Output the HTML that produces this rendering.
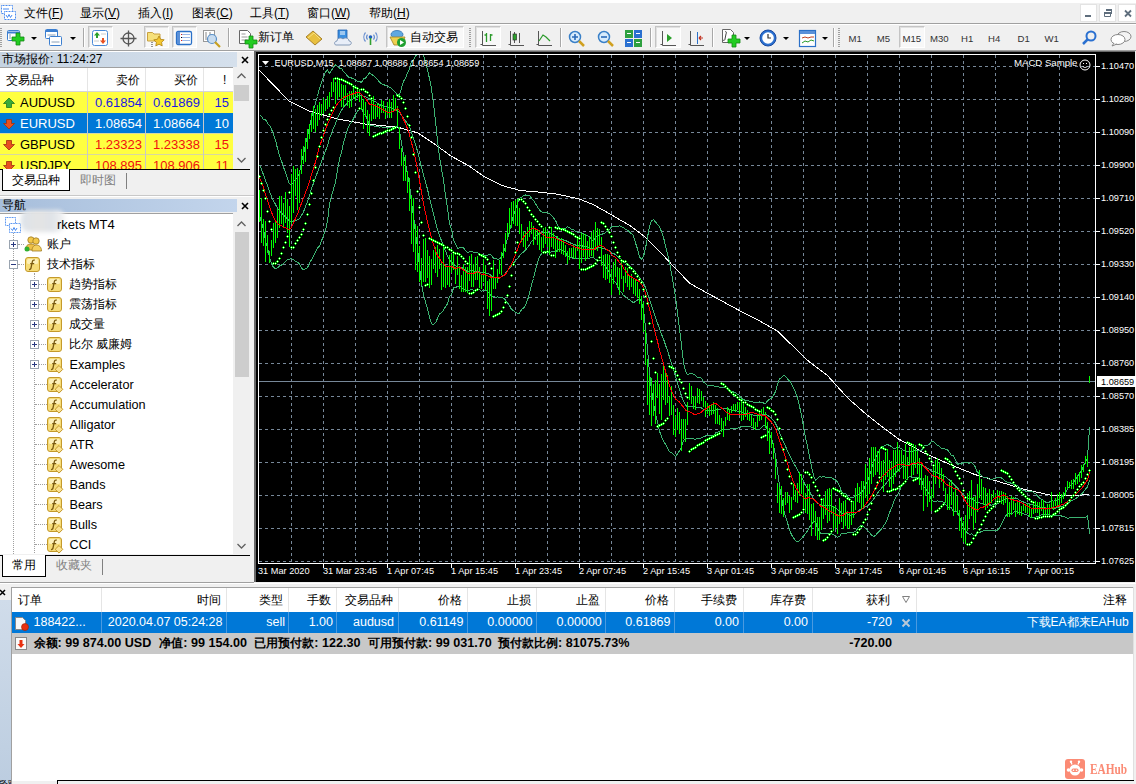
<!DOCTYPE html>
<html><head><meta charset="utf-8">
<style>
*{margin:0;padding:0;box-sizing:border-box}
html,body{width:1136px;height:784px;overflow:hidden;background:#f0f0f0;font-family:"Liberation Sans",sans-serif;font-size:12px;color:#000}
.a{position:absolute}
.t{position:absolute;white-space:nowrap;line-height:12px}
.r{text-align:right}
svg{position:absolute;overflow:visible}
.mw td{}
</style></head><body>
<!-- top white strip -->
<div class="a" style="left:0;top:0;width:1136px;height:3px;background:#fff"></div>
<!-- menu bar -->
<svg style="left:1px;top:5px" width="15" height="15" viewBox="0 0 15 15"><rect x="0.5" y="0.5" width="11" height="8" fill="#fff" stroke="#4a8cf0" stroke-dasharray="1 0.5"/><rect x="3.5" y="6.5" width="11" height="8" fill="#fff" stroke="#4a8cf0" stroke-dasharray="1 0.5"/><path d="M5 10l1.5 2.5 1.5-3 1.5 3 1.5-2.5" stroke="#4a8cf0" fill="none"/><path d="M2 4h6" stroke="#4a8cf0"/></svg>
<div class="a" style="left:0;top:23px;width:1136px;height:1px;background:#a0a0a0"></div>
<div class="a" style="left:0;top:24px;width:1136px;height:1px;background:#fff"></div>
<div class="t" style="left:24px;top:7px">文件(<u>F</u>)</div>
<div class="t" style="left:80px;top:7px">显示(<u>V</u>)</div>
<div class="t" style="left:138px;top:7px">插入(<u>I</u>)</div>
<div class="t" style="left:192px;top:7px">图表(<u>C</u>)</div>
<div class="t" style="left:250px;top:7px">工具(<u>T</u>)</div>
<div class="t" style="left:307px;top:7px">窗口(<u>W</u>)</div>
<div class="t" style="left:369px;top:7px">帮助(<u>H</u>)</div>
<!-- MDI buttons -->
<div class="a" style="left:1080px;top:4px;width:17px;height:18px;background:#fff;border:1px solid #e3e3e3"></div>
<div class="a" style="left:1099px;top:4px;width:17px;height:18px;background:#fff;border:1px solid #e3e3e3"></div>
<div class="a" style="left:1118px;top:4px;width:18px;height:18px;background:#fff;border:1px solid #e3e3e3"></div>
<svg style="left:1070px;top:0px" width="66" height="26" viewBox="0 0 66 26"><path d="M15 15h6v2h-6z" fill="#5f6e7d"/><path d="M34.5 12.5h6v4h-6z" fill="none" stroke="#5f6e7d"/><path d="M34 12h7v2h-7zM36 9h6v2h-6zM41 9h1v5h-1z" fill="#5f6e7d"/><path d="M55 10.5l6 6M61 10.5l-6 6" stroke="#5f6e7d" stroke-width="1.8"/></svg>
<!-- toolbar bottom -->
<div class="a" style="left:0;top:50px;width:1136px;height:1px;background:#a0a0a0"></div>

<div class="a" style="left:0px;top:28px;width:2px;height:20px;background:repeating-linear-gradient(180deg,#a0a0a0 0 1px,transparent 1px 2px)"></div>
<svg style="left:7px;top:29px" width="18" height="17" viewBox="0 0 18 17"><rect x="0.5" y="1.5" width="12" height="10" rx="1" fill="#fff" stroke="#3c7fd0"/><path d="M0.5 3.5h12" stroke="#3c7fd0" stroke-width="2"/><path d="M3 5v5" stroke="#8aa0b8"/><path d="M9 4h4v4h4v4h-4v4h-4v-4h-4v-4h4z" fill="#22cc22" stroke="#118811" stroke-width="0.8"/></svg>
<svg style="left:31px;top:37px" width="6" height="4" viewBox="0 0 6 4"><path d="M0 0h6L3 3z" fill="#000"/></svg>
<svg style="left:45px;top:29px" width="18" height="18" viewBox="0 0 18 18"><rect x="0.5" y="0.5" width="12" height="9" rx="1" fill="#fff" stroke="#3c7fd0"/><path d="M0.5 2h12" stroke="#3c7fd0" stroke-width="2"/><rect x="4.5" y="7.5" width="12" height="9" rx="1" fill="#fff" stroke="#3c7fd0"/><path d="M2.5 6h8M6.5 13h8" stroke="#8aa0b8"/></svg>
<svg style="left:70px;top:37px" width="6" height="4" viewBox="0 0 6 4"><path d="M0 0h6L3 3z" fill="#000"/></svg>
<div class="a" style="left:83px;top:28px;width:1px;height:19px;background:#a8a8a8"></div>
<div class="a" style="left:84px;top:28px;width:1px;height:19px;background:#fff"></div>
<div class="a" style="left:88px;top:26px;width:25px;height:22px;background:#f8f8f8;border:1px solid #c4c4c4;border-right-color:#fff;border-bottom-color:#fff;box-shadow:inset 1px 1px 0 #e0e0e0"></div>
<svg style="left:92px;top:30px" width="16" height="16" viewBox="0 0 16 16"><rect x="0.5" y="0.5" width="15" height="15" rx="2" fill="#fff" stroke="#4a8ad8"/><path d="M5 2l3 3.5H6v2.5H4V5.5H2z" fill="#2aa02a"/><path d="M11 14l3-3.5h-2V8h-2v2.5H8z" fill="#e85020"/><path d="M9 4h5M2 11h5" stroke="#ccc"/></svg>
<svg style="left:120px;top:30px" width="17" height="17" viewBox="0 0 17 17"><circle cx="8.5" cy="8.5" r="5.5" fill="none" stroke="#555" stroke-width="1.3"/><path d="M8.5 0.5v16M0.5 8.5h16" stroke="#555" stroke-width="1.3"/></svg>
<div class="a" style="left:144px;top:26px;width:25px;height:22px;background:#f8f8f8;border:1px solid #c4c4c4;border-right-color:#fff;border-bottom-color:#fff;box-shadow:inset 1px 1px 0 #e0e0e0"></div>
<svg style="left:147px;top:30px" width="18" height="17" viewBox="0 0 18 17"><path d="M0.5 2.5h5l1.5 1.5h6v7h-12.5z" fill="#f6e07a" stroke="#c8a040"/><path d="M12 6l1.6 3.3 3.6 0.5-2.6 2.5 0.6 3.6-3.2-1.7-3.2 1.7 0.6-3.6-2.6-2.5 3.6-0.5z" fill="#f4c830" stroke="#b08010" stroke-width="0.8"/><path d="M5 12v5" stroke="#333" stroke-dasharray="1 1"/></svg>
<div class="a" style="left:172px;top:26px;width:25px;height:22px;background:#f8f8f8;border:1px solid #c4c4c4;border-right-color:#fff;border-bottom-color:#fff;box-shadow:inset 1px 1px 0 #e0e0e0"></div>
<svg style="left:176px;top:31px" width="17" height="15" viewBox="0 0 17 15"><rect x="0.5" y="0.5" width="15" height="13" rx="1.5" fill="#fff" stroke="#2a70c8" stroke-width="1.3"/><path d="M1 1h3v12H1z" fill="#5a90d8"/><path d="M6 3.5h8M6 6.5h8M6 9.5h8" stroke="#9ab8e8"/><path d="M5 3h1v1H5zM5 9h1v1H5z" fill="#e02020"/><path d="M5 6h1v1H5z" fill="#000"/></svg>
<svg style="left:203px;top:30px" width="20" height="18" viewBox="0 0 20 18"><rect x="0.5" y="0.5" width="11" height="11" fill="#fff" stroke="#999"/><path d="M3 2v8M7 2v8" stroke="#888"/><circle cx="9" cy="9" r="4.5" fill="#c8dcf0" stroke="#5a90c8" stroke-width="1.2"/><path d="M12 12l5 5" stroke="#c8a020" stroke-width="2.2"/></svg>
<div class="a" style="left:228px;top:28px;width:1px;height:19px;background:#a8a8a8"></div>
<div class="a" style="left:229px;top:28px;width:1px;height:19px;background:#fff"></div>
<svg style="left:239px;top:30px" width="18" height="18" viewBox="0 0 18 18"><path d="M0.5 0.5h8l3 3v10h-11z" fill="#fff" stroke="#666"/><path d="M2.5 4h4M2.5 7h6M2.5 10h6" stroke="#999"/><path d="M10 6h4v4h4v4h-4v4h-4v-4h-4v-4h4z" fill="#22cc22" stroke="#118811" stroke-width="0.8"/></svg>
<div class="t" style="left:258px;top:31px">新订单</div>
<svg style="left:305px;top:30px" width="18" height="16" viewBox="0 0 18 16"><path d="M1 7L8 1l9 8-7 6z" fill="#e8c040" stroke="#a07820" stroke-width="0.9"/><path d="M3 8l6-5 6 6" fill="none" stroke="#f8e080"/></svg>
<svg style="left:334px;top:29px" width="17" height="18" viewBox="0 0 17 18"><path d="M4 1h9v9H4z" fill="#3c90e0" stroke="#2060b0" stroke-width="0.8"/><path d="M6 3h5M6 5h5" stroke="#fff"/><path d="M2 16c-2 0-2-4 1-4 0-3 4-4 6-2 2-2 6-1 6 2 3 0 3 4 0 4z" fill="#e8eef8" stroke="#7890b0" stroke-width="0.9"/></svg>
<svg style="left:362px;top:29px" width="17" height="18" viewBox="0 0 17 18"><path d="M3.5 12.5a7 7 0 0 1 0-9M13.5 12.5a7 7 0 0 0 0-9M5.5 10.5a4 4 0 0 1 0-5M11.5 10.5a4 4 0 0 0 0-5" fill="none" stroke="#6a90d0" stroke-width="1.2"/><circle cx="8.5" cy="8" r="1.8" fill="#2060c0"/><path d="M8.5 9v7" stroke="#30a030" stroke-width="1.6"/></svg>
<div class="a" style="left:386px;top:26px;width:78px;height:22px;background:#f8f8f8;border:1px solid #c4c4c4;border-right-color:#fff;border-bottom-color:#fff;box-shadow:inset 1px 1px 0 #e0e0e0"></div>
<svg style="left:389px;top:30px" width="18" height="17" viewBox="0 0 18 17"><ellipse cx="8" cy="4.5" rx="6" ry="4" fill="#60a8e0" stroke="#3070b0" stroke-width="0.8"/><path d="M1 7l15 0-3 8H5z" fill="#f0d050" stroke="#a08020" stroke-width="0.8"/><circle cx="12.5" cy="12.5" r="4.5" fill="#20a030"/><path d="M11 10v5l4-2.5z" fill="#fff"/></svg>
<div class="t" style="left:410px;top:31px">自动交易</div>
<div class="a" style="left:469px;top:28px;width:2px;height:20px;background:repeating-linear-gradient(180deg,#a0a0a0 0 1px,transparent 1px 2px)"></div>
<div class="a" style="left:475px;top:26px;width:26px;height:22px;background:#f8f8f8;border:1px solid #c4c4c4;border-right-color:#fff;border-bottom-color:#fff;box-shadow:inset 1px 1px 0 #e0e0e0"></div>
<svg style="left:480px;top:30px" width="17" height="17" viewBox="0 0 17 17"><path d="M2.5 1v14.5H16M0.5 14.5h2" stroke="#555" fill="none"/><path d="M6.5 3v9M4.5 5h2M10.5 4v7M10.5 5h2" stroke="#2a9a2a" fill="none" stroke-width="1.3"/></svg>
<svg style="left:508px;top:30px" width="17" height="17" viewBox="0 0 17 17"><path d="M2.5 1v14.5H16M0.5 14.5h2" stroke="#555" fill="none"/><path d="M6.5 2v11" stroke="#555"/><rect x="5" y="4" width="3.5" height="6" fill="#2aa02a" stroke="#333" stroke-width="0.7"/><path d="M11.5 3v10" stroke="#555"/></svg>
<svg style="left:536px;top:30px" width="17" height="17" viewBox="0 0 17 17"><path d="M2.5 1v14.5H16M0.5 14.5h2" stroke="#555" fill="none"/><path d="M3 11l4-6 3 2 4 4" stroke="#2a9a2a" fill="none" stroke-width="1.2"/></svg>
<div class="a" style="left:560px;top:28px;width:1px;height:19px;background:#a8a8a8"></div>
<div class="a" style="left:561px;top:28px;width:1px;height:19px;background:#fff"></div>
<svg style="left:568px;top:30px" width="18" height="18" viewBox="0 0 18 18"><circle cx="7" cy="7" r="5.5" fill="#d8ecfc" stroke="#3a80c8" stroke-width="1.5"/><path d="M11 11l5 5" stroke="#d0a020" stroke-width="2.5"/><path d="M4 7h6M7 4v6" stroke="#2a6ab8" stroke-width="1.6"/></svg>
<svg style="left:597px;top:30px" width="18" height="18" viewBox="0 0 18 18"><circle cx="7" cy="7" r="5.5" fill="#d8ecfc" stroke="#3a80c8" stroke-width="1.5"/><path d="M11 11l5 5" stroke="#d0a020" stroke-width="2.5"/><path d="M4 7h6" stroke="#2a6ab8" stroke-width="1.6"/></svg>
<svg style="left:625px;top:30px" width="17" height="17" viewBox="0 0 17 17"><rect x="0" y="0" width="8" height="8" fill="#2ea040"/><rect x="9" y="0" width="8" height="8" fill="#2a70d0"/><rect x="0" y="9" width="8" height="8" fill="#2a70d0"/><rect x="9" y="9" width="8" height="8" fill="#2ea040"/><path d="M2 3.5h4M11 3.5h4M2 12.5h4M11 12.5h4" stroke="#fff"/></svg>
<div class="a" style="left:650px;top:28px;width:1px;height:19px;background:#a8a8a8"></div>
<div class="a" style="left:651px;top:28px;width:1px;height:19px;background:#fff"></div>
<div class="a" style="left:655px;top:26px;width:26px;height:22px;background:#f8f8f8;border:1px solid #c4c4c4;border-right-color:#fff;border-bottom-color:#fff;box-shadow:inset 1px 1px 0 #e0e0e0"></div>
<svg style="left:660px;top:30px" width="17" height="17" viewBox="0 0 17 17"><path d="M2.5 1v14.5H16M0.5 14.5h2" stroke="#555" fill="none"/><path d="M7 4v8l5-4z" fill="#2aa02a"/></svg>
<svg style="left:688px;top:30px" width="17" height="17" viewBox="0 0 17 17"><path d="M2.5 1v14.5H16M0.5 14.5h2" stroke="#555" fill="none"/><path d="M9.5 2v12" stroke="#2a70c8"/><path d="M15 8h-4M11 8l2-2M11 8l2 2" stroke="#c03020" stroke-width="1.2"/></svg>
<div class="a" style="left:712px;top:28px;width:1px;height:19px;background:#a8a8a8"></div>
<div class="a" style="left:713px;top:28px;width:1px;height:19px;background:#fff"></div>
<svg style="left:722px;top:29px" width="17" height="18" viewBox="0 0 17 18"><path d="M0.5 0.5h8l3 3v10h-11z" fill="#fff" stroke="#666"/><path d="M3 3c1-1 2 0 1 2l-1 5c0 1-1 2-2 1" stroke="#444" fill="none"/><path d="M10 6h4v4h4v4h-4v4h-4v-4h-4v-4h4z" fill="#22cc22" stroke="#118811" stroke-width="0.8"/></svg>
<svg style="left:744px;top:37px" width="6" height="4" viewBox="0 0 6 4"><path d="M0 0h6L3 3z" fill="#000"/></svg>
<svg style="left:759px;top:29px" width="18" height="18" viewBox="0 0 18 18"><circle cx="9" cy="9" r="8" fill="#2a70d0" stroke="#1a4aa0"/><circle cx="9" cy="9" r="5.8" fill="#fff"/><path d="M9 5v4h3" stroke="#333" stroke-width="1.2" fill="none"/></svg>
<svg style="left:783px;top:37px" width="6" height="4" viewBox="0 0 6 4"><path d="M0 0h6L3 3z" fill="#000"/></svg>
<svg style="left:799px;top:30px" width="17" height="17" viewBox="0 0 17 17"><rect x="0.5" y="0.5" width="16" height="16" fill="#fff" stroke="#2a70c8" stroke-width="1.2"/><path d="M1 1h15v3H1z" fill="#5a90d8"/><path d="M3 8l3-1 3 1 3-1 3 0" stroke="#c04020" fill="none"/><path d="M3 13l3-2 3 1 3-2 3 1" stroke="#2a9a2a" fill="none"/></svg>
<svg style="left:822px;top:37px" width="6" height="4" viewBox="0 0 6 4"><path d="M0 0h6L3 3z" fill="#000"/></svg>
<div class="a" style="left:833px;top:28px;width:1px;height:19px;background:#a8a8a8"></div>
<div class="a" style="left:834px;top:28px;width:1px;height:19px;background:#fff"></div>
<div class="a" style="left:838px;top:28px;width:2px;height:20px;background:repeating-linear-gradient(180deg,#a0a0a0 0 1px,transparent 1px 2px)"></div>
<div class="a" style="left:899px;top:26px;width:26px;height:22px;background:#f8f8f8;border:1px solid #c4c4c4;border-right-color:#fff;border-bottom-color:#fff;box-shadow:inset 1px 1px 0 #e0e0e0"></div>
<div class="t" style="left:848.6px;top:33.5px;font-size:9.6px;line-height:10px;color:#333">M1</div>
<div class="t" style="left:876.7px;top:33.5px;font-size:9.6px;line-height:10px;color:#333">M5</div>
<div class="t" style="left:902.5px;top:33.5px;font-size:9.6px;line-height:10px;color:#333">M15</div>
<div class="t" style="left:930px;top:33.5px;font-size:9.6px;line-height:10px;color:#333">M30</div>
<div class="t" style="left:961px;top:33.5px;font-size:9.6px;line-height:10px;color:#333">H1</div>
<div class="t" style="left:988px;top:33.5px;font-size:9.6px;line-height:10px;color:#333">H4</div>
<div class="t" style="left:1017.5px;top:33.5px;font-size:9.6px;line-height:10px;color:#333">D1</div>
<div class="t" style="left:1044.5px;top:33.5px;font-size:9.6px;line-height:10px;color:#333">W1</div>
<svg style="left:1082px;top:30px" width="15" height="15" viewBox="0 0 15 15"><circle cx="9" cy="6" r="4.5" fill="none" stroke="#2a70d0" stroke-width="2"/><path d="M6 9l-5 5" stroke="#2a70d0" stroke-width="2.5"/></svg>
<svg style="left:1110px;top:31px" width="22" height="15" viewBox="0 0 22 15"><ellipse cx="14" cy="5.5" rx="7" ry="5" fill="#f4f4f4" stroke="#888"/><ellipse cx="8" cy="8.5" rx="7" ry="5" fill="#fff" stroke="#888"/><path d="M4 12l-2 3 5-2" fill="#fff" stroke="#888"/></svg>

<!-- LEFT PANEL: market watch -->
<div class="a" style="left:0;top:51px;width:254px;height:1px;background:#fff"></div>
<div class="a" style="left:0;top:52px;width:237px;height:15px;background:linear-gradient(90deg,#c5d3e2,#d5e0ec)"></div>
<div class="t" style="left:2px;top:53px;">市场报价: 11:24:27</div>
<svg style="left:241px;top:56px" width="8" height="8"><path d="M1 1l6 6M7 1l-6 6" stroke="#000" stroke-width="1.6"/></svg>
<div class="a" style="left:0;top:67px;width:233px;height:102px;background:#fff;border-top:1px solid #a0a0a0"></div>
<!-- header -->
<div class="a" style="left:87px;top:68px;width:1px;height:24px;background:#e5e5e5"></div>
<div class="a" style="left:145px;top:68px;width:1px;height:24px;background:#e5e5e5"></div>
<div class="a" style="left:203px;top:68px;width:1px;height:24px;background:#e5e5e5"></div>
<div class="t" style="left:6px;top:74px">交易品种</div>
<div class="t r" style="left:100px;top:74px;width:40px">卖价</div>
<div class="t r" style="left:158px;top:74px;width:40px">买价</div>
<div class="t" style="left:223px;top:74px">!</div>
<div class="a" style="left:0;top:91px;width:233px;height:1px;background:#d5d5d5"></div>
<!-- rows -->
<div class="a" style="left:0;top:92px;width:233px;height:21px;background:#ffff40"></div>
<div class="a" style="left:0;top:113px;width:233px;height:21px;background:#0078d7"></div>
<div class="a" style="left:0;top:134px;width:233px;height:21px;background:#ffff40"></div>
<div class="a" style="left:0;top:155px;width:233px;height:14px;background:#ffff40;overflow:hidden"></div>
<div class="a" style="left:0;top:133px;width:233px;height:1px;background:#d8d8a0"></div>
<div class="a" style="left:0;top:154px;width:233px;height:1px;background:#d8d8a0"></div>
<div class="a" style="left:87px;top:92px;width:1px;height:77px;background:#c8c8c8"></div>
<div class="a" style="left:145px;top:92px;width:1px;height:77px;background:#c8c8c8"></div>
<div class="a" style="left:203px;top:92px;width:1px;height:77px;background:#c8c8c8"></div>
<div class="a" style="left:0;top:92px;width:233px;height:77px;overflow:hidden">
 <svg style="left:3px;top:6px" width="12" height="10"><path d="M6 0L11.5 5.5H8.5V9.5H3.5V5.5H0.5Z" fill="#3aaa3a" stroke="#1f7a1f" stroke-width="0.8"/></svg>
 <svg style="left:3px;top:27px" width="12" height="10"><path d="M6 10L11.5 4.5H8.5V0.5H3.5V4.5H0.5Z" fill="#e85020" stroke="#a03010" stroke-width="0.8"/></svg>
 <svg style="left:3px;top:48px" width="12" height="10"><path d="M6 10L11.5 4.5H8.5V0.5H3.5V4.5H0.5Z" fill="#e85020" stroke="#a03010" stroke-width="0.8"/></svg>
 <svg style="left:3px;top:69px" width="12" height="10"><path d="M6 10L11.5 4.5H8.5V0.5H3.5V4.5H0.5Z" fill="#e85020" stroke="#a03010" stroke-width="0.8"/></svg>
 <div class="t" style="left:20px;top:4px;font-size:13px;line-height:13px">AUDUSD</div>
 <div class="t" style="left:20px;top:25px;font-size:13px;line-height:13px;color:#fff">EURUSD</div>
 <div class="t" style="left:20px;top:46px;font-size:13px;line-height:13px">GBPUSD</div>
 <div class="t" style="left:20px;top:67px;font-size:13px;line-height:13px">USDJPY</div>
 <div class="t r" style="left:88px;top:4px;width:54px;font-size:13px;line-height:13px;color:#1a1ae0">0.61854</div>
 <div class="t r" style="left:146px;top:4px;width:54px;font-size:13px;line-height:13px;color:#1a1ae0">0.61869</div>
 <div class="t r" style="left:204px;top:4px;width:25px;font-size:13px;line-height:13px;color:#1a1ae0">15</div>
 <div class="t r" style="left:88px;top:25px;width:54px;font-size:13px;line-height:13px;color:#fff">1.08654</div>
 <div class="t r" style="left:146px;top:25px;width:54px;font-size:13px;line-height:13px;color:#fff">1.08664</div>
 <div class="t r" style="left:204px;top:25px;width:25px;font-size:13px;line-height:13px;color:#fff">10</div>
 <div class="t r" style="left:88px;top:46px;width:54px;font-size:13px;line-height:13px;color:#f01010">1.23323</div>
 <div class="t r" style="left:146px;top:46px;width:54px;font-size:13px;line-height:13px;color:#f01010">1.23338</div>
 <div class="t r" style="left:204px;top:46px;width:25px;font-size:13px;line-height:13px;color:#f01010">15</div>
 <div class="t r" style="left:88px;top:67px;width:54px;font-size:13px;line-height:13px;color:#f01010">108.895</div>
 <div class="t r" style="left:146px;top:67px;width:54px;font-size:13px;line-height:13px;color:#f01010">108.906</div>
 <div class="t r" style="left:204px;top:67px;width:25px;font-size:13px;line-height:13px;color:#f01010">11</div>
</div>
<!-- scrollbar -->
<div class="a" style="left:233px;top:67px;width:17px;height:102px;background:#f0f0f0"></div>
<svg style="left:237px;top:73px" width="9" height="6"><path d="M0.5 5L4.5 1L8.5 5" fill="none" stroke="#606060" stroke-width="1.3"/></svg>
<div class="a" style="left:234px;top:85px;width:15px;height:16px;background:#cdcdcd"></div>
<svg style="left:237px;top:157px" width="9" height="6"><path d="M0.5 1L4.5 5L8.5 1" fill="none" stroke="#606060" stroke-width="1.3"/></svg>
<!-- tabs -->
<div class="a" style="left:0;top:169px;width:250px;height:1px;background:#000"></div>
<div class="a" style="left:2px;top:169px;width:68px;height:22px;background:#fff;border:1px solid #000;border-top:none"></div>
<div class="t" style="left:12px;top:174px">交易品种</div>
<div class="t" style="left:80px;top:174px;color:#808080">即时图</div>
<div class="a" style="left:126px;top:173px;width:1px;height:16px;background:#808080"></div>
<div class="a" style="left:0;top:195px;width:254px;height:1px;background:#c8c8c8"></div>
<div class="a" style="left:0;top:196px;width:254px;height:1px;background:#fff"></div>

<!-- NAVIGATOR -->
<div class="a" style="left:0;top:199px;width:237px;height:13px;background:linear-gradient(90deg,#a7bedb,#c3d5ec)"></div>
<div class="t" style="left:2px;top:199px;">导航</div>
<svg style="left:241px;top:202px" width="8" height="8"><path d="M1 1l6 6M7 1l-6 6" stroke="#000" stroke-width="1.6"/></svg>
<div class="a" style="left:0;top:213px;width:233px;height:341px;background:#fff;border-top:1px solid #a0a0a0"></div>
<div class="a" style="left:13px;top:233px;width:0;height:321px;border-left:1px dotted #a0a0a0"></div>
<div class="a" style="left:34px;top:273px;width:0;height:280px;border-left:1px dotted #a0a0a0"></div>
<svg style="left:5px;top:217px" width="16" height="16" viewBox="0 0 16 16"><rect x="0.5" y="0.5" width="10" height="8" fill="#fff" stroke="#4a8cf0" stroke-dasharray="1 0.6"/><rect x="4.5" y="6.5" width="11" height="9" fill="#fff" stroke="#4a8cf0" stroke-dasharray="1 0.6"/><path d="M6 11.5l1.5 2 1.5-3 1.5 3 1.5-2.5" stroke="#4a8cf0" fill="none"/></svg>
<div class="a" style="left:21px;top:210px;width:44px;height:22px;background:linear-gradient(90deg,#dde3ea,#e4e4e4 40%,#dfe3e8 70%,#f4f4f4);border-radius:8px;filter:blur(2px)"></div>
<div class="t" style="left:57px;top:218px;font-size:13px;line-height:13px">rkets MT4</div>
<svg style="left:9px;top:240px" width="9" height="9" viewBox="0 0 9 9"><rect x="0.5" y="0.5" width="8" height="8" fill="#fff" stroke="#9aa4b0"/><path d="M2 4.5h5" stroke="#2a3a80"/><path d="M4.5 2v5" stroke="#2a3a80"/></svg>
<div class="a" style="left:18px;top:244px;width:6px;border-top:1px dotted #a0a0a0"></div>
<svg style="left:24px;top:236px" width="18" height="16" viewBox="0 0 18 16"><circle cx="7" cy="4" r="3.2" fill="#f2c84a" stroke="#a07820" stroke-width="0.8"/><circle cx="12" cy="5" r="3.2" fill="#f2c84a" stroke="#a07820" stroke-width="0.8"/><path d="M1.5 14c0-4 2-6 5.5-6s5.5 2 5.5 6z" fill="#eec048" stroke="#a07820" stroke-width="0.8"/><path d="M8 15c0-4 2-6 4.5-6s5 2 5 6z" fill="#f4d060" stroke="#a07820" stroke-width="0.8"/><circle cx="3" cy="13" r="2.5" fill="#30b030"/></svg>
<div class="t" style="left:47px;top:238px">账户</div>
<svg style="left:9px;top:260px" width="9" height="9" viewBox="0 0 9 9"><rect x="0.5" y="0.5" width="8" height="8" fill="#fff" stroke="#9aa4b0"/><path d="M2 4.5h5" stroke="#2a3a80"/></svg>
<div class="a" style="left:18px;top:264px;width:6px;border-top:1px dotted #a0a0a0"></div>
<svg style="left:25px;top:257px" width="16" height="16" viewBox="0 0 16 16"><rect x="0.5" y="0.5" width="14" height="14" rx="2.5" fill="#f6dc78" stroke="#c49a2c"/><rect x="2" y="2" width="11" height="5" rx="1.5" fill="#fdf0b8"/><path d="M9.8 3.2c-1.3-0.4-2.2 0.2-2.5 1.6l-1.3 6.2c-0.3 1.3-1 1.7-2 1.4M5.2 6.6h4" fill="none" stroke="#7a5a10" stroke-width="1.3"/></svg>
<div class="t" style="left:47px;top:258px">技术指标</div>
<svg style="left:30px;top:280px" width="9" height="9" viewBox="0 0 9 9"><rect x="0.5" y="0.5" width="8" height="8" fill="#fff" stroke="#9aa4b0"/><path d="M2 4.5h5" stroke="#2a3a80"/><path d="M4.5 2v5" stroke="#2a3a80"/></svg>
<div class="a" style="left:39px;top:284px;width:7px;border-top:1px dotted #a0a0a0"></div>
<svg style="left:47px;top:277px" width="16" height="16" viewBox="0 0 16 16"><rect x="0.5" y="0.5" width="14" height="14" rx="2.5" fill="#f6dc78" stroke="#c49a2c"/><rect x="2" y="2" width="11" height="5" rx="1.5" fill="#fdf0b8"/><path d="M9.8 3.2c-1.3-0.4-2.2 0.2-2.5 1.6l-1.3 6.2c-0.3 1.3-1 1.7-2 1.4M5.2 6.6h4" fill="none" stroke="#7a5a10" stroke-width="1.3"/></svg>
<div class="t" style="left:69px;top:278px">趋势指标</div>
<svg style="left:30px;top:300px" width="9" height="9" viewBox="0 0 9 9"><rect x="0.5" y="0.5" width="8" height="8" fill="#fff" stroke="#9aa4b0"/><path d="M2 4.5h5" stroke="#2a3a80"/><path d="M4.5 2v5" stroke="#2a3a80"/></svg>
<div class="a" style="left:39px;top:304px;width:7px;border-top:1px dotted #a0a0a0"></div>
<svg style="left:47px;top:297px" width="16" height="16" viewBox="0 0 16 16"><rect x="0.5" y="0.5" width="14" height="14" rx="2.5" fill="#f6dc78" stroke="#c49a2c"/><rect x="2" y="2" width="11" height="5" rx="1.5" fill="#fdf0b8"/><path d="M9.8 3.2c-1.3-0.4-2.2 0.2-2.5 1.6l-1.3 6.2c-0.3 1.3-1 1.7-2 1.4M5.2 6.6h4" fill="none" stroke="#7a5a10" stroke-width="1.3"/></svg>
<div class="t" style="left:69px;top:298px">震荡指标</div>
<svg style="left:30px;top:320px" width="9" height="9" viewBox="0 0 9 9"><rect x="0.5" y="0.5" width="8" height="8" fill="#fff" stroke="#9aa4b0"/><path d="M2 4.5h5" stroke="#2a3a80"/><path d="M4.5 2v5" stroke="#2a3a80"/></svg>
<div class="a" style="left:39px;top:324px;width:7px;border-top:1px dotted #a0a0a0"></div>
<svg style="left:47px;top:317px" width="16" height="16" viewBox="0 0 16 16"><rect x="0.5" y="0.5" width="14" height="14" rx="2.5" fill="#f6dc78" stroke="#c49a2c"/><rect x="2" y="2" width="11" height="5" rx="1.5" fill="#fdf0b8"/><path d="M9.8 3.2c-1.3-0.4-2.2 0.2-2.5 1.6l-1.3 6.2c-0.3 1.3-1 1.7-2 1.4M5.2 6.6h4" fill="none" stroke="#7a5a10" stroke-width="1.3"/></svg>
<div class="t" style="left:69px;top:318px">成交量</div>
<svg style="left:30px;top:340px" width="9" height="9" viewBox="0 0 9 9"><rect x="0.5" y="0.5" width="8" height="8" fill="#fff" stroke="#9aa4b0"/><path d="M2 4.5h5" stroke="#2a3a80"/><path d="M4.5 2v5" stroke="#2a3a80"/></svg>
<div class="a" style="left:39px;top:344px;width:7px;border-top:1px dotted #a0a0a0"></div>
<svg style="left:47px;top:337px" width="16" height="16" viewBox="0 0 16 16"><rect x="0.5" y="0.5" width="14" height="14" rx="2.5" fill="#f6dc78" stroke="#c49a2c"/><rect x="2" y="2" width="11" height="5" rx="1.5" fill="#fdf0b8"/><path d="M9.8 3.2c-1.3-0.4-2.2 0.2-2.5 1.6l-1.3 6.2c-0.3 1.3-1 1.7-2 1.4M5.2 6.6h4" fill="none" stroke="#7a5a10" stroke-width="1.3"/></svg>
<div class="t" style="left:69px;top:338px">比尔 威廉姆</div>
<svg style="left:30px;top:360px" width="9" height="9" viewBox="0 0 9 9"><rect x="0.5" y="0.5" width="8" height="8" fill="#fff" stroke="#9aa4b0"/><path d="M2 4.5h5" stroke="#2a3a80"/><path d="M4.5 2v5" stroke="#2a3a80"/></svg>
<div class="a" style="left:39px;top:364px;width:7px;border-top:1px dotted #a0a0a0"></div>
<svg style="left:47px;top:357px" width="16" height="16" viewBox="0 0 16 16"><rect x="0.5" y="0.5" width="14" height="14" rx="2.5" fill="#f6dc78" stroke="#c49a2c"/><rect x="2" y="2" width="11" height="5" rx="1.5" fill="#fdf0b8"/><path d="M9.8 3.2c-1.3-0.4-2.2 0.2-2.5 1.6l-1.3 6.2c-0.3 1.3-1 1.7-2 1.4M5.2 6.6h4" fill="none" stroke="#7a5a10" stroke-width="1.3"/><path d="M12 8.5l3.8 3.8-3.8 3.8-3.8-3.8z" fill="#fbe290" stroke="#c49a2c" stroke-width="1"/></svg>
<div class="t" style="left:69.5px;top:359px;font-size:12.7px;line-height:13px">Examples</div>
<div class="a" style="left:35px;top:384px;width:12px;border-top:1px dotted #a0a0a0"></div>
<svg style="left:47px;top:377px" width="16" height="16" viewBox="0 0 16 16"><rect x="0.5" y="0.5" width="14" height="14" rx="2.5" fill="#f6dc78" stroke="#c49a2c"/><rect x="2" y="2" width="11" height="5" rx="1.5" fill="#fdf0b8"/><path d="M9.8 3.2c-1.3-0.4-2.2 0.2-2.5 1.6l-1.3 6.2c-0.3 1.3-1 1.7-2 1.4M5.2 6.6h4" fill="none" stroke="#7a5a10" stroke-width="1.3"/><path d="M12 8.5l3.8 3.8-3.8 3.8-3.8-3.8z" fill="#fbe290" stroke="#c49a2c" stroke-width="1"/></svg>
<div class="t" style="left:69.5px;top:379px;font-size:12.7px;line-height:13px">Accelerator</div>
<div class="a" style="left:35px;top:404px;width:12px;border-top:1px dotted #a0a0a0"></div>
<svg style="left:47px;top:397px" width="16" height="16" viewBox="0 0 16 16"><rect x="0.5" y="0.5" width="14" height="14" rx="2.5" fill="#f6dc78" stroke="#c49a2c"/><rect x="2" y="2" width="11" height="5" rx="1.5" fill="#fdf0b8"/><path d="M9.8 3.2c-1.3-0.4-2.2 0.2-2.5 1.6l-1.3 6.2c-0.3 1.3-1 1.7-2 1.4M5.2 6.6h4" fill="none" stroke="#7a5a10" stroke-width="1.3"/><path d="M12 8.5l3.8 3.8-3.8 3.8-3.8-3.8z" fill="#fbe290" stroke="#c49a2c" stroke-width="1"/></svg>
<div class="t" style="left:69.5px;top:399px;font-size:12.7px;line-height:13px">Accumulation</div>
<div class="a" style="left:35px;top:424px;width:12px;border-top:1px dotted #a0a0a0"></div>
<svg style="left:47px;top:417px" width="16" height="16" viewBox="0 0 16 16"><rect x="0.5" y="0.5" width="14" height="14" rx="2.5" fill="#f6dc78" stroke="#c49a2c"/><rect x="2" y="2" width="11" height="5" rx="1.5" fill="#fdf0b8"/><path d="M9.8 3.2c-1.3-0.4-2.2 0.2-2.5 1.6l-1.3 6.2c-0.3 1.3-1 1.7-2 1.4M5.2 6.6h4" fill="none" stroke="#7a5a10" stroke-width="1.3"/><path d="M12 8.5l3.8 3.8-3.8 3.8-3.8-3.8z" fill="#fbe290" stroke="#c49a2c" stroke-width="1"/></svg>
<div class="t" style="left:69.5px;top:419px;font-size:12.7px;line-height:13px">Alligator</div>
<div class="a" style="left:35px;top:444px;width:12px;border-top:1px dotted #a0a0a0"></div>
<svg style="left:47px;top:437px" width="16" height="16" viewBox="0 0 16 16"><rect x="0.5" y="0.5" width="14" height="14" rx="2.5" fill="#f6dc78" stroke="#c49a2c"/><rect x="2" y="2" width="11" height="5" rx="1.5" fill="#fdf0b8"/><path d="M9.8 3.2c-1.3-0.4-2.2 0.2-2.5 1.6l-1.3 6.2c-0.3 1.3-1 1.7-2 1.4M5.2 6.6h4" fill="none" stroke="#7a5a10" stroke-width="1.3"/><path d="M12 8.5l3.8 3.8-3.8 3.8-3.8-3.8z" fill="#fbe290" stroke="#c49a2c" stroke-width="1"/></svg>
<div class="t" style="left:69.5px;top:439px;font-size:12.7px;line-height:13px">ATR</div>
<div class="a" style="left:35px;top:464px;width:12px;border-top:1px dotted #a0a0a0"></div>
<svg style="left:47px;top:457px" width="16" height="16" viewBox="0 0 16 16"><rect x="0.5" y="0.5" width="14" height="14" rx="2.5" fill="#f6dc78" stroke="#c49a2c"/><rect x="2" y="2" width="11" height="5" rx="1.5" fill="#fdf0b8"/><path d="M9.8 3.2c-1.3-0.4-2.2 0.2-2.5 1.6l-1.3 6.2c-0.3 1.3-1 1.7-2 1.4M5.2 6.6h4" fill="none" stroke="#7a5a10" stroke-width="1.3"/><path d="M12 8.5l3.8 3.8-3.8 3.8-3.8-3.8z" fill="#fbe290" stroke="#c49a2c" stroke-width="1"/></svg>
<div class="t" style="left:69.5px;top:459px;font-size:12.7px;line-height:13px">Awesome</div>
<div class="a" style="left:35px;top:484px;width:12px;border-top:1px dotted #a0a0a0"></div>
<svg style="left:47px;top:477px" width="16" height="16" viewBox="0 0 16 16"><rect x="0.5" y="0.5" width="14" height="14" rx="2.5" fill="#f6dc78" stroke="#c49a2c"/><rect x="2" y="2" width="11" height="5" rx="1.5" fill="#fdf0b8"/><path d="M9.8 3.2c-1.3-0.4-2.2 0.2-2.5 1.6l-1.3 6.2c-0.3 1.3-1 1.7-2 1.4M5.2 6.6h4" fill="none" stroke="#7a5a10" stroke-width="1.3"/><path d="M12 8.5l3.8 3.8-3.8 3.8-3.8-3.8z" fill="#fbe290" stroke="#c49a2c" stroke-width="1"/></svg>
<div class="t" style="left:69.5px;top:479px;font-size:12.7px;line-height:13px">Bands</div>
<div class="a" style="left:35px;top:504px;width:12px;border-top:1px dotted #a0a0a0"></div>
<svg style="left:47px;top:497px" width="16" height="16" viewBox="0 0 16 16"><rect x="0.5" y="0.5" width="14" height="14" rx="2.5" fill="#f6dc78" stroke="#c49a2c"/><rect x="2" y="2" width="11" height="5" rx="1.5" fill="#fdf0b8"/><path d="M9.8 3.2c-1.3-0.4-2.2 0.2-2.5 1.6l-1.3 6.2c-0.3 1.3-1 1.7-2 1.4M5.2 6.6h4" fill="none" stroke="#7a5a10" stroke-width="1.3"/><path d="M12 8.5l3.8 3.8-3.8 3.8-3.8-3.8z" fill="#fbe290" stroke="#c49a2c" stroke-width="1"/></svg>
<div class="t" style="left:69.5px;top:499px;font-size:12.7px;line-height:13px">Bears</div>
<div class="a" style="left:35px;top:524px;width:12px;border-top:1px dotted #a0a0a0"></div>
<svg style="left:47px;top:517px" width="16" height="16" viewBox="0 0 16 16"><rect x="0.5" y="0.5" width="14" height="14" rx="2.5" fill="#f6dc78" stroke="#c49a2c"/><rect x="2" y="2" width="11" height="5" rx="1.5" fill="#fdf0b8"/><path d="M9.8 3.2c-1.3-0.4-2.2 0.2-2.5 1.6l-1.3 6.2c-0.3 1.3-1 1.7-2 1.4M5.2 6.6h4" fill="none" stroke="#7a5a10" stroke-width="1.3"/><path d="M12 8.5l3.8 3.8-3.8 3.8-3.8-3.8z" fill="#fbe290" stroke="#c49a2c" stroke-width="1"/></svg>
<div class="t" style="left:69.5px;top:519px;font-size:12.7px;line-height:13px">Bulls</div>
<div class="a" style="left:35px;top:544px;width:12px;border-top:1px dotted #a0a0a0"></div>
<svg style="left:47px;top:537px" width="16" height="16" viewBox="0 0 16 16"><rect x="0.5" y="0.5" width="14" height="14" rx="2.5" fill="#f6dc78" stroke="#c49a2c"/><rect x="2" y="2" width="11" height="5" rx="1.5" fill="#fdf0b8"/><path d="M9.8 3.2c-1.3-0.4-2.2 0.2-2.5 1.6l-1.3 6.2c-0.3 1.3-1 1.7-2 1.4M5.2 6.6h4" fill="none" stroke="#7a5a10" stroke-width="1.3"/><path d="M12 8.5l3.8 3.8-3.8 3.8-3.8-3.8z" fill="#fbe290" stroke="#c49a2c" stroke-width="1"/></svg>
<div class="t" style="left:69.5px;top:539px;font-size:12.7px;line-height:13px">CCI</div>
<div class="a" style="left:233px;top:214px;width:17px;height:340px;background:#f0f0f0"></div>
<svg style="left:237px;top:221px" width="9" height="6"><path d="M0.5 5L4.5 1L8.5 5" fill="none" stroke="#606060" stroke-width="1.3"/></svg>
<div class="a" style="left:235px;top:232px;width:14px;height:145px;background:#cdcdcd"></div>
<svg style="left:237px;top:543px" width="9" height="6"><path d="M0.5 1L4.5 5L8.5 1" fill="none" stroke="#606060" stroke-width="1.3"/></svg>
<div class="a" style="left:0;top:555px;width:250px;height:1px;background:#000"></div>
<div class="a" style="left:2px;top:555px;width:44px;height:22px;background:#fff;border:1px solid #000;border-top:none"></div>
<div class="t" style="left:12px;top:559px">常用</div>
<div class="t" style="left:56px;top:559px;color:#808080">收藏夹</div>
<div class="a" style="left:102px;top:559px;width:1px;height:16px;background:#808080"></div>
<div class="a" style="left:0;top:582px;width:254px;height:1px;background:#a0a0a0"></div>

<!-- chart window -->
<div class="a" style="left:254px;top:51px;width:2px;height:531px;background:#696969"></div>
<div class="a" style="left:254px;top:51px;width:881px;height:1px;background:#696969"></div>
<svg style="left:0;top:0" width="1136" height="784" viewBox="0 0 1136 784" shape-rendering="crispEdges">
<rect x="256" y="52" width="879" height="530" fill="#000"/>
<path d="M291.5 55V563M323.5 55V563M355.5 55V563M387.5 55V563M419.5 55V563M451.5 55V563M483.5 55V563M515.5 55V563M547.5 55V563M579.5 55V563M611.5 55V563M643.5 55V563M675.5 55V563M707.5 55V563M739.5 55V563M771.5 55V563M803.5 55V563M835.5 55V563M867.5 55V563M899.5 55V563M931.5 55V563M963.5 55V563M995.5 55V563M1027.5 55V563M1059.5 55V563M259 66.5H1095M259 99.5H1095M259 132.5H1095M259 165.5H1095M259 198.5H1095M259 231.5H1095M259 264.5H1095M259 297.5H1095M259 330.5H1095M259 363.5H1095M259 396.5H1095M259 429.5H1095M259 462.5H1095M259 495.5H1095M259 528.5H1095M259 561.5H1095" stroke="#778899" stroke-width="1" stroke-dasharray="3 3" fill="none"/>
<clipPath id="cp"><rect x="259" y="55" width="836" height="508"/></clipPath><g clip-path="url(#cp)">
<path d="M259 381.5H1095" stroke="#778899" stroke-width="1"/>
<polyline points="259.0,70.0 289.0,101.0 309.0,111.0 338.0,119.0 365.0,124.0 397.0,127.0 418.0,133.0 433.0,143.0 451.0,156.0 469.0,166.0 484.0,176.5 502.0,185.5 520.0,190.5 538.0,192.0 556.0,194.0 578.0,198.6 593.0,204.4 611.0,214.6 629.0,225.0 644.0,236.0 662.0,254.0 675.0,268.0 690.0,283.5 710.7,295.0 738.0,309.8 758.0,320.0 778.0,331.5 807.0,360.0 827.0,375.0 847.7,398.0 865.5,413.6 881.0,426.0 898.0,438.7 923.5,452.7 949.0,464.0 974.5,474.4 1000.0,482.0 1025.6,489.7 1051.0,495.3 1071.5,496.0 1089.0,494.3" fill="none" stroke="#fff" stroke-width="1"/>
<polyline points="259.5,114.6 261.5,116.3 263.5,120.0 265.5,119.7 267.5,123.2 269.5,125.3 271.5,129.3 273.5,134.2 275.5,140.1 277.5,148.5 279.5,155.8 281.5,160.9 283.5,167.2 285.5,171.9 287.5,178.6 289.5,183.9 291.5,184.4 293.5,182.2 295.5,178.9 297.5,177.5 299.5,172.9 301.5,162.5 303.5,154.1 305.5,144.6 307.5,135.8 309.5,127.5 311.5,117.9 313.5,109.9 315.5,103.0 317.5,96.5 319.5,88.1 321.5,82.4 323.5,76.9 325.5,72.2 327.5,69.8 329.5,73.3 331.5,70.2 333.5,67.5 335.5,64.8 337.5,66.6 339.5,68.1 341.5,68.2 343.5,71.8 345.5,73.4 347.5,76.3 349.5,77.6 351.5,78.0 353.5,78.7 355.5,80.0 357.5,81.3 359.5,81.6 361.5,82.4 363.5,78.9 365.5,78.2 367.5,75.6 369.5,73.0 371.5,74.1 373.5,75.7 375.5,77.2 377.5,79.5 379.5,82.0 381.5,83.9 383.5,84.3 385.5,85.6 387.5,86.2 389.5,87.4 391.5,88.3 393.5,90.6 395.5,92.3 397.5,95.2 399.5,94.6 401.5,88.1 403.5,81.1 405.5,78.7 407.5,72.8 409.5,68.8 411.5,61.6 413.5,60.5 415.5,56.1 417.5,54.6 419.5,50.9 421.5,51.4 423.5,55.2 425.5,61.5 427.5,70.0 429.5,78.7 431.5,88.8 433.5,103.5 435.5,121.2 437.5,140.9 439.5,157.2 441.5,168.9 443.5,180.2 445.5,195.8 447.5,207.7 449.5,223.6 451.5,229.5 453.5,240.2 455.5,243.9 457.5,248.1 459.5,248.0 461.5,247.5 463.5,247.6 465.5,250.6 467.5,252.3 469.5,252.0 471.5,251.5 473.5,252.4 475.5,252.1 477.5,252.2 479.5,254.5 481.5,254.4 483.5,255.6 485.5,255.7 487.5,255.1 489.5,254.7 491.5,255.2 493.5,258.2 495.5,258.4 497.5,259.2 499.5,259.0 501.5,256.5 503.5,252.3 505.5,246.4 507.5,238.4 509.5,231.4 511.5,222.8 513.5,215.6 515.5,209.5 517.5,203.2 519.5,198.5 521.5,197.2 523.5,195.8 525.5,195.0 527.5,195.1 529.5,195.6 531.5,198.3 533.5,200.2 535.5,203.8 537.5,206.9 539.5,210.0 541.5,211.7 543.5,212.6 545.5,212.7 547.5,212.9 549.5,213.4 551.5,215.6 553.5,217.7 555.5,220.4 557.5,224.9 559.5,229.0 561.5,228.8 563.5,228.7 565.5,228.2 567.5,226.7 569.5,227.5 571.5,229.7 573.5,229.8 575.5,231.1 577.5,232.6 579.5,232.7 581.5,232.7 583.5,233.8 585.5,234.5 587.5,235.9 589.5,236.9 591.5,239.8 593.5,240.7 595.5,236.9 597.5,235.9 599.5,234.5 601.5,234.6 603.5,233.5 605.5,232.7 607.5,230.7 609.5,229.5 611.5,226.9 613.5,226.4 615.5,226.6 617.5,226.8 619.5,225.7 621.5,226.5 623.5,227.7 625.5,229.2 627.5,230.2 629.5,232.1 631.5,233.8 633.5,235.8 635.5,243.0 637.5,249.0 639.5,256.8 641.5,259.1 643.5,256.7 645.5,248.4 647.5,237.2 649.5,226.8 651.5,220.9 653.5,219.7 655.5,222.0 657.5,224.5 659.5,226.2 661.5,231.9 663.5,237.2 665.5,245.8 667.5,253.6 669.5,262.4 671.5,273.5 673.5,284.9 675.5,297.1 677.5,313.1 679.5,328.7 681.5,345.5 683.5,362.4 685.5,371.4 687.5,374.8 689.5,373.9 691.5,373.3 693.5,374.1 695.5,375.3 697.5,377.2 699.5,377.2 701.5,378.1 703.5,381.9 705.5,383.6 707.5,385.3 709.5,385.4 711.5,386.0 713.5,385.7 715.5,386.6 717.5,386.7 719.5,387.1 721.5,387.8 723.5,387.9 725.5,388.0 727.5,388.1 729.5,389.9 731.5,391.8 733.5,392.0 735.5,392.5 737.5,394.3 739.5,395.3 741.5,398.2 743.5,399.6 745.5,400.5 747.5,400.9 749.5,401.1 751.5,401.4 753.5,402.2 755.5,402.3 757.5,402.3 759.5,402.0 761.5,402.7 763.5,403.0 765.5,403.4 767.5,400.9 769.5,399.1 771.5,398.0 773.5,395.6 775.5,391.5 777.5,384.1 779.5,379.1 781.5,377.3 783.5,375.5 785.5,376.2 787.5,378.8 789.5,380.8 791.5,383.8 793.5,388.0 795.5,392.3 797.5,397.9 799.5,406.2 801.5,414.8 803.5,426.3 805.5,437.7 807.5,446.3 809.5,456.0 811.5,466.4 813.5,475.7 815.5,480.6 817.5,478.3 819.5,476.9 821.5,477.1 823.5,476.8 825.5,477.1 827.5,477.4 829.5,477.4 831.5,477.6 833.5,479.0 835.5,479.8 837.5,482.1 839.5,485.8 841.5,492.1 843.5,493.2 845.5,493.2 847.5,496.3 849.5,498.3 851.5,497.6 853.5,497.2 855.5,496.3 857.5,494.8 859.5,494.2 861.5,492.2 863.5,489.7 865.5,485.2 867.5,480.9 869.5,475.9 871.5,469.1 873.5,461.9 875.5,457.8 877.5,453.8 879.5,449.7 881.5,447.2 883.5,446.2 885.5,445.4 887.5,444.2 889.5,445.7 891.5,446.3 893.5,448.2 895.5,448.4 897.5,446.5 899.5,447.8 901.5,448.5 903.5,450.4 905.5,451.3 907.5,452.0 909.5,451.7 911.5,450.8 913.5,451.3 915.5,450.5 917.5,450.4 919.5,450.6 921.5,450.6 923.5,446.3 925.5,445.3 927.5,445.3 929.5,444.1 931.5,441.6 933.5,441.7 935.5,443.3 937.5,445.2 939.5,446.2 941.5,448.5 943.5,448.9 945.5,449.1 947.5,449.8 949.5,452.4 951.5,455.9 953.5,455.9 955.5,460.3 957.5,464.5 959.5,463.6 961.5,464.0 963.5,462.2 965.5,462.1 967.5,462.7 969.5,463.3 971.5,462.6 973.5,464.3 975.5,467.3 977.5,472.8 979.5,473.2 981.5,475.5 983.5,477.5 985.5,477.7 987.5,477.7 989.5,479.2 991.5,479.7 993.5,478.5 995.5,478.4 997.5,477.5 999.5,477.1 1001.5,477.9 1003.5,479.6 1005.5,481.2 1007.5,482.3 1009.5,482.6 1011.5,483.4 1013.5,484.2 1015.5,484.9 1017.5,485.3 1019.5,487.8 1021.5,489.9 1023.5,490.4 1025.5,491.0 1027.5,491.3 1029.5,491.1 1031.5,491.1 1033.5,492.6 1035.5,493.7 1037.5,495.9 1039.5,498.0 1041.5,499.4 1043.5,500.4 1045.5,502.0 1047.5,502.0 1049.5,502.1 1051.5,500.3 1053.5,501.1 1055.5,500.6 1057.5,499.9 1059.5,498.4 1061.5,496.8 1063.5,495.1 1065.5,492.4 1067.5,488.9 1069.5,486.5 1071.5,484.5 1073.5,482.4 1075.5,479.6 1077.5,476.7 1079.5,473.4 1081.5,470.4 1083.5,466.6 1085.5,461.4 1087.5,458.2 1089.5,427.4" fill="none" stroke="#3cb371" stroke-width="1"/>
<polyline points="259.5,164.8 261.5,169.5 263.5,174.7 265.5,180.3 267.5,185.7 269.5,191.5 271.5,196.6 273.5,200.7 275.5,204.5 277.5,208.2 279.5,210.8 281.5,213.0 283.5,215.3 285.5,216.8 287.5,218.9 289.5,221.5 291.5,221.6 293.5,221.0 295.5,220.3 297.5,219.9 299.5,218.6 301.5,215.3 303.5,211.9 305.5,206.7 307.5,201.7 309.5,195.3 311.5,188.8 313.5,183.1 315.5,177.5 317.5,172.2 319.5,167.0 321.5,161.8 323.5,156.1 325.5,151.0 327.5,145.4 329.5,138.7 331.5,133.3 333.5,128.1 335.5,123.7 337.5,118.3 339.5,113.6 341.5,110.2 343.5,107.4 345.5,104.9 347.5,102.7 349.5,101.0 351.5,100.1 353.5,98.6 355.5,97.3 357.5,96.0 359.5,95.6 361.5,95.2 363.5,96.2 365.5,96.6 367.5,97.7 369.5,99.1 371.5,100.0 373.5,100.8 375.5,101.9 377.5,103.2 379.5,104.6 381.5,105.4 383.5,105.8 385.5,106.7 387.5,107.0 389.5,107.6 391.5,108.2 393.5,109.0 395.5,109.6 397.5,110.6 399.5,112.5 401.5,115.6 403.5,118.1 405.5,120.7 407.5,123.8 409.5,126.6 411.5,132.4 413.5,138.0 415.5,144.5 417.5,151.1 419.5,159.1 421.5,167.5 423.5,175.0 425.5,181.8 427.5,189.3 429.5,197.9 431.5,206.3 433.5,214.0 435.5,222.0 437.5,229.6 439.5,235.5 441.5,240.9 443.5,245.2 445.5,251.2 447.5,255.8 449.5,260.1 451.5,261.9 453.5,264.1 455.5,265.8 457.5,267.1 459.5,267.1 461.5,267.5 463.5,268.6 465.5,270.4 467.5,271.8 469.5,271.2 471.5,270.5 473.5,271.3 475.5,271.2 477.5,271.2 479.5,272.0 481.5,272.8 483.5,273.1 485.5,272.9 487.5,273.3 489.5,274.2 491.5,276.1 493.5,277.3 495.5,277.8 497.5,278.1 499.5,278.0 501.5,276.9 503.5,275.3 505.5,273.2 507.5,270.5 509.5,268.5 511.5,266.1 513.5,263.1 515.5,260.9 517.5,258.4 519.5,255.8 521.5,253.4 523.5,252.0 525.5,250.1 527.5,247.6 529.5,244.8 531.5,241.3 533.5,239.3 535.5,236.8 537.5,234.6 539.5,233.4 541.5,232.8 543.5,232.0 545.5,232.0 547.5,232.3 549.5,232.9 551.5,233.7 553.5,234.8 555.5,236.1 557.5,237.7 559.5,238.9 561.5,239.4 563.5,239.9 565.5,240.4 567.5,241.5 569.5,242.5 571.5,243.6 573.5,244.2 575.5,245.0 577.5,245.5 579.5,245.8 581.5,245.8 583.5,246.2 585.5,246.6 587.5,247.3 589.5,247.7 591.5,248.5 593.5,248.9 595.5,248.3 597.5,247.9 599.5,247.5 601.5,247.8 603.5,248.6 605.5,249.3 607.5,250.0 609.5,250.9 611.5,252.6 613.5,253.6 615.5,254.4 617.5,256.4 619.5,258.2 621.5,259.5 623.5,261.7 625.5,262.8 627.5,264.3 629.5,266.0 631.5,267.5 633.5,269.3 635.5,272.1 637.5,274.5 639.5,277.7 641.5,280.4 643.5,283.2 645.5,287.7 647.5,293.0 649.5,299.6 651.5,305.4 653.5,311.6 655.5,317.9 657.5,323.1 659.5,328.6 661.5,334.3 663.5,339.0 665.5,345.0 667.5,350.6 669.5,357.1 671.5,363.2 673.5,369.5 675.5,376.7 677.5,383.4 679.5,389.8 681.5,396.1 683.5,401.4 685.5,405.0 687.5,406.8 689.5,406.4 691.5,406.1 693.5,406.6 695.5,407.2 697.5,407.8 699.5,407.8 701.5,408.0 703.5,409.1 705.5,409.8 707.5,410.5 709.5,410.6 711.5,411.0 713.5,410.7 715.5,409.8 717.5,409.5 719.5,409.2 721.5,408.9 723.5,408.9 725.5,408.9 727.5,408.6 729.5,409.5 731.5,410.2 733.5,410.4 735.5,410.6 737.5,411.2 739.5,411.5 741.5,412.3 743.5,412.8 745.5,413.3 747.5,413.5 749.5,413.8 751.5,414.4 753.5,415.2 755.5,415.8 757.5,416.1 759.5,415.8 761.5,415.2 763.5,414.4 765.5,414.1 767.5,415.3 769.5,416.6 771.5,418.2 773.5,420.4 775.5,423.3 777.5,427.6 779.5,432.6 781.5,437.2 783.5,442.0 785.5,446.4 787.5,450.7 789.5,455.3 791.5,459.3 793.5,462.8 795.5,466.5 797.5,469.8 799.5,473.5 801.5,476.6 803.5,481.2 805.5,485.6 807.5,488.5 809.5,491.7 811.5,495.3 813.5,498.4 815.5,501.2 817.5,503.2 819.5,504.5 821.5,505.4 823.5,505.1 825.5,505.4 827.5,505.6 829.5,505.6 831.5,505.7 833.5,506.8 835.5,507.8 837.5,509.6 839.5,511.2 841.5,512.8 843.5,513.3 845.5,513.3 847.5,514.5 849.5,515.4 851.5,515.0 853.5,514.8 855.5,513.8 857.5,511.8 859.5,510.1 861.5,508.8 863.5,508.2 865.5,506.9 867.5,505.8 869.5,504.0 871.5,502.1 873.5,499.2 875.5,496.6 877.5,493.4 879.5,490.4 881.5,488.2 883.5,486.1 885.5,484.4 887.5,481.4 889.5,479.1 891.5,477.2 893.5,475.4 895.5,473.0 897.5,471.0 899.5,469.3 901.5,467.4 903.5,466.4 905.5,465.8 907.5,465.1 909.5,464.3 911.5,463.9 913.5,464.4 915.5,463.9 917.5,463.9 919.5,464.7 921.5,464.9 923.5,466.2 925.5,466.9 927.5,468.3 929.5,469.3 931.5,471.0 933.5,471.4 935.5,472.4 937.5,473.1 939.5,473.9 941.5,474.9 943.5,475.5 945.5,476.7 947.5,478.4 949.5,479.9 951.5,482.0 953.5,484.0 955.5,486.0 957.5,488.1 959.5,490.4 961.5,493.2 963.5,494.6 965.5,496.4 967.5,497.9 969.5,498.8 971.5,498.2 973.5,499.7 975.5,501.5 977.5,502.8 979.5,502.9 981.5,503.5 983.5,504.2 985.5,504.2 987.5,504.3 989.5,504.9 991.5,505.1 993.5,504.3 995.5,504.3 997.5,503.8 999.5,502.5 1001.5,501.1 1003.5,499.8 1005.5,498.7 1007.5,498.2 1009.5,498.1 1011.5,498.8 1013.5,498.2 1015.5,498.0 1017.5,498.8 1019.5,500.3 1021.5,501.4 1023.5,502.0 1025.5,502.8 1027.5,503.3 1029.5,503.9 1031.5,504.5 1033.5,505.1 1035.5,505.5 1037.5,506.2 1039.5,506.9 1041.5,507.2 1043.5,507.7 1045.5,508.3 1047.5,508.3 1049.5,508.4 1051.5,508.0 1053.5,508.2 1055.5,508.1 1057.5,507.7 1059.5,507.1 1061.5,506.4 1063.5,505.8 1065.5,504.8 1067.5,503.6 1069.5,502.2 1071.5,500.9 1073.5,499.9 1075.5,498.7 1077.5,497.2 1079.5,495.6 1081.5,494.2 1083.5,492.0 1085.5,489.3 1087.5,486.8 1089.5,480.5" fill="none" stroke="#3cb371" stroke-width="1"/>
<polyline points="259.5,215.0 261.5,222.6 263.5,229.5 265.5,240.9 267.5,248.1 269.5,257.7 271.5,263.9 273.5,267.2 275.5,268.9 277.5,267.9 279.5,265.8 281.5,265.0 283.5,263.4 285.5,261.6 287.5,259.2 289.5,259.1 291.5,258.8 293.5,259.8 295.5,261.7 297.5,262.2 299.5,264.2 301.5,268.2 303.5,269.6 305.5,268.8 307.5,267.6 309.5,263.2 311.5,259.7 313.5,256.2 315.5,252.0 317.5,248.0 319.5,245.9 321.5,241.1 323.5,235.2 325.5,229.9 327.5,221.1 329.5,204.1 331.5,196.4 333.5,188.7 335.5,182.6 337.5,169.9 339.5,159.1 341.5,152.2 343.5,142.9 345.5,136.3 347.5,129.2 349.5,124.5 351.5,122.1 353.5,118.5 355.5,114.6 357.5,110.8 359.5,109.6 361.5,107.9 363.5,113.5 365.5,114.9 367.5,119.7 369.5,125.1 371.5,125.9 373.5,125.9 375.5,126.6 377.5,126.8 379.5,127.1 381.5,126.8 383.5,127.3 385.5,127.8 387.5,127.9 389.5,127.8 391.5,128.2 393.5,127.5 395.5,126.9 397.5,125.9 399.5,130.5 401.5,143.1 403.5,155.0 405.5,162.6 407.5,174.7 409.5,184.4 411.5,203.2 413.5,215.5 415.5,232.9 417.5,247.6 419.5,267.3 421.5,283.6 423.5,294.9 425.5,302.1 427.5,308.6 429.5,317.2 431.5,323.8 433.5,324.6 435.5,322.8 437.5,318.3 439.5,313.9 441.5,312.9 443.5,310.3 445.5,306.5 447.5,304.0 449.5,296.6 451.5,294.3 453.5,288.0 455.5,287.7 457.5,286.2 459.5,286.1 461.5,287.5 463.5,289.6 465.5,290.2 467.5,291.2 469.5,290.4 471.5,289.4 473.5,290.2 475.5,290.3 477.5,290.3 479.5,289.6 481.5,291.2 483.5,290.7 485.5,290.0 487.5,291.4 489.5,293.7 491.5,297.1 493.5,296.3 495.5,297.1 497.5,297.0 499.5,297.1 501.5,297.3 503.5,298.3 505.5,300.0 507.5,302.7 509.5,305.6 511.5,309.5 513.5,310.6 515.5,312.3 517.5,313.5 519.5,313.0 521.5,309.6 523.5,308.2 525.5,305.3 527.5,300.1 529.5,293.9 531.5,284.2 533.5,278.5 535.5,269.8 537.5,262.4 539.5,256.8 541.5,253.9 543.5,251.4 545.5,251.2 547.5,251.7 549.5,252.3 551.5,251.8 553.5,251.9 555.5,251.8 557.5,250.4 559.5,248.8 561.5,250.0 563.5,251.0 565.5,252.6 567.5,256.3 569.5,257.5 571.5,257.5 573.5,258.6 575.5,258.9 577.5,258.4 579.5,258.9 581.5,259.0 583.5,258.5 585.5,258.7 587.5,258.7 589.5,258.5 591.5,257.3 593.5,257.2 595.5,259.7 597.5,260.0 599.5,260.6 601.5,261.0 603.5,263.8 605.5,265.9 607.5,269.2 609.5,272.3 611.5,278.3 613.5,280.8 615.5,282.1 617.5,286.0 619.5,290.7 621.5,292.4 623.5,295.6 625.5,296.4 627.5,298.5 629.5,299.9 631.5,301.2 633.5,302.8 635.5,301.2 637.5,300.0 639.5,298.6 641.5,301.6 643.5,309.7 645.5,327.0 647.5,348.8 649.5,372.4 651.5,389.9 653.5,403.5 655.5,413.8 657.5,421.7 659.5,431.0 661.5,436.7 663.5,440.7 665.5,444.3 667.5,447.6 669.5,451.8 671.5,452.9 673.5,454.2 675.5,456.4 677.5,453.8 679.5,450.8 681.5,446.7 683.5,440.5 685.5,438.5 687.5,438.8 689.5,438.8 691.5,438.8 693.5,439.0 695.5,439.1 697.5,438.4 699.5,438.4 701.5,438.0 703.5,436.4 705.5,436.0 707.5,435.7 709.5,435.8 711.5,435.9 713.5,435.7 715.5,433.0 717.5,432.3 719.5,431.2 721.5,430.0 723.5,429.9 725.5,429.7 727.5,429.2 729.5,429.1 731.5,428.6 733.5,428.7 735.5,428.8 737.5,428.1 739.5,427.7 741.5,426.3 743.5,426.1 745.5,426.1 747.5,426.2 749.5,426.5 751.5,427.4 753.5,428.1 755.5,429.3 757.5,429.9 759.5,429.6 761.5,427.7 763.5,425.8 765.5,424.9 767.5,429.6 769.5,434.0 771.5,438.5 773.5,445.3 775.5,455.2 777.5,471.2 779.5,486.0 781.5,497.2 783.5,508.6 785.5,516.6 787.5,522.6 789.5,529.8 791.5,534.7 793.5,537.6 795.5,540.7 797.5,541.7 799.5,540.8 801.5,538.5 803.5,536.1 805.5,533.5 807.5,530.8 809.5,527.3 811.5,524.3 813.5,521.1 815.5,521.7 817.5,528.1 819.5,532.0 821.5,533.8 823.5,533.4 825.5,533.6 827.5,533.7 829.5,533.7 831.5,533.8 833.5,534.7 835.5,535.9 837.5,537.1 839.5,536.6 841.5,533.4 843.5,533.4 845.5,533.4 847.5,532.7 849.5,532.4 851.5,532.4 853.5,532.3 855.5,531.4 857.5,528.8 859.5,526.1 861.5,525.4 863.5,526.6 865.5,528.6 867.5,530.6 869.5,532.2 871.5,535.1 873.5,536.5 875.5,535.4 877.5,533.0 879.5,531.1 881.5,529.2 883.5,525.9 885.5,523.4 887.5,518.7 889.5,512.5 891.5,508.2 893.5,502.6 895.5,497.7 897.5,495.4 899.5,490.8 901.5,486.2 903.5,482.5 905.5,480.3 907.5,478.2 909.5,476.9 911.5,477.0 913.5,477.4 915.5,477.3 917.5,477.3 919.5,478.8 921.5,479.2 923.5,486.2 925.5,488.4 927.5,491.3 929.5,494.5 931.5,500.4 933.5,501.2 935.5,501.6 937.5,500.9 939.5,501.6 941.5,501.3 943.5,502.1 945.5,504.3 947.5,507.0 949.5,507.4 951.5,508.0 953.5,512.1 955.5,511.8 957.5,511.7 959.5,517.1 961.5,522.3 963.5,527.0 965.5,530.7 967.5,533.1 969.5,534.3 971.5,533.8 973.5,535.1 975.5,535.6 977.5,532.9 979.5,532.6 981.5,531.5 983.5,530.8 985.5,530.8 987.5,530.8 989.5,530.6 991.5,530.6 993.5,530.1 995.5,530.1 997.5,530.1 999.5,528.0 1001.5,524.2 1003.5,520.0 1005.5,516.1 1007.5,514.1 1009.5,513.5 1011.5,514.2 1013.5,512.3 1015.5,511.0 1017.5,512.4 1019.5,512.8 1021.5,512.9 1023.5,513.7 1025.5,514.6 1027.5,515.3 1029.5,516.7 1031.5,517.9 1033.5,517.6 1035.5,517.3 1037.5,516.6 1039.5,515.7 1041.5,514.9 1043.5,515.0 1045.5,514.5 1047.5,514.7 1049.5,514.7 1051.5,515.6 1053.5,515.4 1055.5,515.5 1057.5,515.6 1059.5,515.7 1061.5,516.0 1063.5,516.5 1065.5,517.1 1067.5,518.3 1069.5,517.9 1071.5,517.2 1073.5,517.3 1075.5,517.8 1077.5,517.7 1079.5,517.8 1081.5,517.9 1083.5,517.3 1085.5,517.2 1087.5,515.5 1089.5,533.6" fill="none" stroke="#3cb371" stroke-width="1"/>
<path d="M259.5 190V222M261.5 198V243M263.5 219V246M265.5 221V262M267.5 235V253M269.5 251V263M271.5 240V256M273.5 223V248M275.5 220V243M277.5 209V238M279.5 196V228M281.5 196V224M283.5 203V228M285.5 192V223M287.5 199V233M289.5 206V247M291.5 174V224M293.5 166V213M295.5 169V196M297.5 168V210M299.5 171V203M301.5 149V174M303.5 146V164M305.5 138V162M307.5 129V149M309.5 124V139M311.5 113V132M313.5 106V129M315.5 109V132M317.5 105V126M319.5 102V120M321.5 104V116M323.5 98V114M325.5 100V111M327.5 96V109M329.5 92V107M331.5 82V97M333.5 78V92M335.5 82V104M337.5 80V99M339.5 80V97M341.5 84V107M343.5 85V107M345.5 85V99M347.5 93V106M349.5 91V108M351.5 91V107M353.5 88V98M355.5 93V101M357.5 90V98M359.5 89V102M361.5 96V110M363.5 99V129M365.5 102V117M367.5 110V133M369.5 114V136M371.5 100V121M373.5 96V119M375.5 104V119M377.5 103V117M379.5 104V119M381.5 100V113M383.5 101V113M385.5 108V119M387.5 102V115M389.5 99V118M391.5 102V118M393.5 95V111M395.5 98V111M397.5 106V126M399.5 127V149M401.5 148V166M403.5 156V181M405.5 155V181M407.5 171V193M409.5 178V211M411.5 195V244M413.5 198V252M415.5 224V270M417.5 226V272M419.5 246V282M421.5 258V285M423.5 239V282M425.5 238V282M427.5 250V278M429.5 256V288M431.5 259V285M433.5 250V269M435.5 247V273M437.5 245V277M439.5 249V269M441.5 262V290M443.5 247V287M445.5 265V288M447.5 266V285M449.5 255V287M451.5 254V273M453.5 253V270M455.5 267V284M457.5 256V275M459.5 266V289M461.5 275V292M463.5 264V292M465.5 267V292M467.5 267V293M469.5 256V281M471.5 254V287M473.5 264V287M475.5 257V280M477.5 256V280M479.5 267V288M481.5 275V289M483.5 259V282M485.5 265V290M487.5 281V309M489.5 279V316M491.5 276V311M493.5 260V289M495.5 277V289M497.5 269V283M499.5 260V274M501.5 252V275M503.5 244V258M505.5 233V252M507.5 223V239M509.5 208V234M511.5 202V228M513.5 201V224M515.5 200V226M517.5 199V226M519.5 208V234M521.5 224V242M523.5 231V247M525.5 232V249M527.5 227V241M529.5 221V237M531.5 222V234M533.5 226V245M535.5 228V240M537.5 229V245M539.5 230V250M541.5 237V252M543.5 228V248M545.5 227V244M547.5 230V247M549.5 233V255M551.5 227V247M553.5 233V249M555.5 239V258M557.5 236V252M559.5 239V252M561.5 238V254M563.5 240V255M565.5 245V257M567.5 251V264M569.5 248V260M571.5 248V257M573.5 245V258M575.5 248V259M577.5 239V251M579.5 242V269M581.5 233V263M583.5 234V257M585.5 234V261M587.5 241V259M589.5 237V257M591.5 232V256M593.5 230V257M595.5 222V250M597.5 228V251M599.5 229V246M601.5 237V266M603.5 255V278M605.5 254V280M607.5 254V279M609.5 255V283M611.5 269V295M613.5 262V284M615.5 259V277M617.5 267V288M619.5 268V295M621.5 261V279M623.5 276V292M625.5 267V283M627.5 268V287M629.5 276V290M631.5 274V287M633.5 279V294M635.5 280V296M637.5 282V298M639.5 289V304M641.5 296V320M643.5 302V332M645.5 330V365M647.5 359V405M649.5 375V415M651.5 378V426M653.5 384V416M655.5 380V424M657.5 373V398M659.5 384V414M661.5 374V420M663.5 366V400M665.5 371V405M667.5 375V403M669.5 396V416M671.5 386V415M673.5 405V435M675.5 416V437M677.5 408V430M679.5 412V434M681.5 419V451M683.5 419V439M685.5 419V442M687.5 402V425M689.5 383V400M691.5 386V404M693.5 396V409M695.5 396V410M697.5 388V403M699.5 389V404M701.5 391V401M703.5 397V407M705.5 401V417M707.5 403V414M709.5 405V416M711.5 405V415M713.5 402V414M715.5 405V424M717.5 408V424M719.5 415V425M721.5 418V432M723.5 421V437M725.5 417V426M727.5 407V420M729.5 409V421M731.5 406V413M733.5 404V411M735.5 404V412M737.5 402V410M739.5 402V414M741.5 402V421M743.5 404V420M745.5 407V417M747.5 410V420M749.5 412V421M751.5 415V426M753.5 418V429M755.5 422V430M757.5 415V427M759.5 411V421M761.5 409V420M763.5 407V414M765.5 412V428M767.5 422V441M769.5 428V454M771.5 432V448M773.5 443V459M775.5 458V479M777.5 483V503M779.5 487V513M781.5 486V514M783.5 498V517M785.5 492V505M787.5 492V503M789.5 496V513M791.5 497V510M793.5 484V500M795.5 490V502M797.5 483V503M799.5 472V496M801.5 474V494M803.5 483V508M805.5 493V513M807.5 484V514M809.5 484V520M811.5 504V536M813.5 503V523M815.5 511V536M817.5 517V540M819.5 517V540M821.5 501V530M823.5 498V519M825.5 491V515M827.5 489V523M829.5 488V521M831.5 489V514M833.5 506V531M835.5 506V528M837.5 514V534M839.5 498V524M841.5 503V522M843.5 501V529M845.5 500V526M847.5 511V529M849.5 513V529M851.5 501V525M853.5 501V518M855.5 488V510M857.5 483V502M859.5 487V503M861.5 481V510M863.5 481V508M865.5 464V498M867.5 468V501M869.5 458V494M871.5 447V484M873.5 447V477M875.5 447V475M877.5 451V472M879.5 449V475M881.5 461V482M883.5 460V492M885.5 452V480M887.5 449V477M889.5 460V487M891.5 461V489M893.5 450V484M895.5 450V477M897.5 442V472M899.5 450V472M901.5 450V466M903.5 455V479M905.5 444V479M907.5 457V480M909.5 447V465M911.5 444V476M913.5 444V475M915.5 445V468M917.5 451V474M919.5 458V485M921.5 464V490M923.5 478V511M925.5 475V496M927.5 476V507M929.5 481V502M931.5 489V511M933.5 466V498M935.5 460V484M937.5 458V474M939.5 462V488M941.5 468V482M943.5 474V491M945.5 488V503M947.5 494V510M949.5 482V510M951.5 480V505M953.5 492V516M955.5 487V511M957.5 496V515M959.5 510V531M961.5 517V538M963.5 521V542M965.5 515V544M967.5 493V531M969.5 491V519M971.5 480V516M973.5 497V530M975.5 496V523M977.5 484V512M979.5 470V498M981.5 479V500M983.5 487V505M985.5 488V510M987.5 493V508M989.5 489V506M991.5 494V503M993.5 490V498M995.5 494V501M997.5 490V500M999.5 491V500M1001.5 491V504M1003.5 492V505M1005.5 493V503M1007.5 496V517M1009.5 502V517M1011.5 496V515M1013.5 497V510M1015.5 503V517M1017.5 500V514M1019.5 501V515M1021.5 506V516M1023.5 503V511M1025.5 504V513M1027.5 504V513M1029.5 504V517M1031.5 509V518M1033.5 503V514M1035.5 501V513M1037.5 502V513M1039.5 502V515M1041.5 500V511M1043.5 500V516M1045.5 507V515M1047.5 504V516M1049.5 504V514M1051.5 492V509M1053.5 501V510M1055.5 498V506M1057.5 494V508M1059.5 492V506M1061.5 494V503M1063.5 492V499M1065.5 487V496M1067.5 481V489M1069.5 482V488M1071.5 480V489M1073.5 479V489M1075.5 473V485M1077.5 475V484M1079.5 472V482M1081.5 465V478M1083.5 464V472M1085.5 456V464M1087.5 455V467M1089.5 376V383" stroke="#00ff00" stroke-width="1" fill="none"/>
<polyline points="259.5,177.5 261.5,182.3 263.5,187.6 265.5,194.6 267.5,200.6 269.5,206.7 271.5,212.4 273.5,216.7 275.5,220.9 277.5,223.7 279.5,224.8 281.5,225.7 283.5,227.7 285.5,227.8 287.5,228.6 289.5,229.6 291.5,227.3 293.5,223.2 295.5,218.4 297.5,213.9 299.5,208.9 301.5,203.2 303.5,198.1 305.5,192.5 307.5,187.6 309.5,181.5 311.5,174.5 313.5,168.6 315.5,161.8 317.5,153.3 319.5,146.8 321.5,141.1 323.5,135.9 325.5,129.5 327.5,124.1 329.5,120.1 331.5,115.1 333.5,110.9 335.5,107.1 337.5,103.8 339.5,101.4 341.5,99.1 343.5,97.9 345.5,96.3 347.5,95.8 349.5,94.8 351.5,94.5 353.5,93.6 355.5,93.0 357.5,92.3 359.5,92.9 361.5,94.1 363.5,96.5 365.5,98.5 367.5,101.3 369.5,104.2 371.5,104.6 373.5,105.1 375.5,105.9 377.5,106.9 379.5,107.9 381.5,108.9 383.5,110.0 385.5,111.5 387.5,112.1 389.5,112.5 391.5,111.8 393.5,111.4 395.5,110.0 397.5,108.8 399.5,110.8 401.5,115.2 403.5,119.6 405.5,123.5 407.5,128.7 409.5,134.5 411.5,142.6 413.5,149.8 415.5,159.4 417.5,169.1 419.5,180.5 421.5,192.4 423.5,203.5 425.5,213.2 427.5,221.7 429.5,230.1 431.5,237.8 433.5,244.8 435.5,250.4 437.5,255.9 439.5,258.2 441.5,262.2 443.5,263.5 445.5,266.4 447.5,267.0 449.5,266.8 451.5,266.7 453.5,267.3 455.5,268.7 457.5,267.9 459.5,267.3 461.5,268.7 463.5,270.0 465.5,271.5 467.5,273.5 469.5,273.4 471.5,273.8 473.5,273.6 475.5,272.3 477.5,271.9 479.5,272.7 481.5,274.7 483.5,274.0 485.5,274.7 487.5,275.9 489.5,276.4 491.5,277.5 493.5,277.2 495.5,277.3 497.5,277.8 499.5,278.1 501.5,276.7 503.5,275.9 505.5,274.3 507.5,271.4 509.5,267.3 511.5,263.8 513.5,259.6 515.5,254.6 517.5,249.2 519.5,243.6 521.5,240.6 523.5,237.2 525.5,234.7 527.5,232.5 529.5,230.5 531.5,228.8 533.5,228.8 535.5,229.0 537.5,229.4 539.5,231.4 541.5,233.5 543.5,234.7 545.5,236.5 547.5,237.8 549.5,238.0 551.5,237.6 553.5,237.7 555.5,238.1 557.5,239.1 559.5,240.2 561.5,240.6 563.5,241.6 565.5,242.9 567.5,244.0 569.5,244.3 571.5,245.4 573.5,246.3 575.5,247.3 577.5,247.4 579.5,248.7 581.5,249.2 583.5,249.1 585.5,249.3 587.5,249.8 589.5,249.8 591.5,250.0 593.5,249.9 595.5,247.8 597.5,246.8 599.5,245.8 601.5,245.8 603.5,246.8 605.5,248.3 607.5,250.0 609.5,251.6 611.5,254.5 613.5,256.3 615.5,257.4 617.5,259.9 619.5,262.5 621.5,264.3 623.5,268.3 625.5,270.6 627.5,273.9 629.5,275.9 631.5,277.0 633.5,278.5 635.5,279.4 637.5,280.5 639.5,281.6 641.5,284.0 643.5,287.9 645.5,293.0 647.5,299.7 649.5,308.9 651.5,317.1 653.5,326.0 655.5,333.9 657.5,341.3 659.5,349.8 661.5,357.1 663.5,363.8 665.5,371.3 667.5,378.1 669.5,385.4 671.5,391.2 673.5,395.4 675.5,399.0 677.5,400.3 679.5,402.1 681.5,404.7 683.5,407.2 685.5,410.0 687.5,411.4 689.5,411.9 691.5,412.9 693.5,414.0 695.5,414.8 697.5,413.8 699.5,413.5 701.5,412.2 703.5,410.1 705.5,409.0 707.5,407.7 709.5,406.2 711.5,404.9 713.5,403.7 715.5,403.2 717.5,404.8 719.5,406.5 721.5,408.1 723.5,409.6 725.5,411.6 727.5,412.7 729.5,414.0 731.5,414.5 733.5,414.7 735.5,414.9 737.5,414.6 739.5,414.3 741.5,414.4 743.5,414.4 745.5,414.4 747.5,413.9 749.5,413.1 751.5,412.8 753.5,412.7 755.5,413.5 757.5,414.2 759.5,414.5 761.5,415.0 763.5,415.0 765.5,415.8 767.5,418.0 769.5,420.2 771.5,422.2 773.5,425.0 775.5,428.9 777.5,434.4 779.5,440.2 781.5,445.9 783.5,451.9 785.5,457.6 787.5,463.7 789.5,470.4 791.5,476.9 793.5,482.2 795.5,486.7 797.5,490.3 799.5,493.4 801.5,495.2 803.5,497.7 805.5,498.6 807.5,498.0 809.5,497.9 811.5,498.4 813.5,499.2 815.5,501.0 817.5,502.8 819.5,504.8 821.5,506.8 823.5,507.1 825.5,508.4 827.5,509.5 829.5,511.7 831.5,511.8 833.5,512.5 835.5,514.2 837.5,515.9 839.5,516.1 841.5,515.8 843.5,515.1 845.5,513.2 847.5,512.3 849.5,512.1 851.5,512.5 853.5,512.7 855.5,512.8 857.5,511.7 859.5,511.2 861.5,509.6 863.5,507.6 865.5,504.6 867.5,501.8 869.5,499.3 871.5,495.7 873.5,492.3 875.5,488.6 877.5,484.5 879.5,481.0 881.5,477.9 883.5,475.5 885.5,474.0 887.5,471.3 889.5,469.6 891.5,468.3 893.5,467.6 895.5,466.1 897.5,464.4 899.5,464.4 901.5,464.2 903.5,464.5 905.5,465.1 907.5,465.6 909.5,465.1 911.5,464.0 913.5,463.7 915.5,463.6 917.5,462.7 919.5,463.1 921.5,462.9 923.5,465.7 925.5,468.2 927.5,469.8 929.5,472.4 931.5,474.8 933.5,475.7 935.5,476.6 937.5,477.0 939.5,478.7 941.5,479.2 943.5,481.0 945.5,483.5 947.5,485.1 949.5,486.5 951.5,486.5 953.5,488.2 955.5,488.9 957.5,489.6 959.5,490.8 961.5,493.9 963.5,497.4 965.5,501.5 967.5,504.2 969.5,506.6 971.5,507.2 973.5,508.6 975.5,509.5 977.5,509.7 979.5,508.7 981.5,507.0 983.5,507.0 985.5,506.5 987.5,505.0 989.5,503.3 991.5,501.5 993.5,499.5 995.5,498.0 997.5,496.7 999.5,497.0 1001.5,495.8 1003.5,495.0 1005.5,495.6 1007.5,497.4 1009.5,498.9 1011.5,499.6 1013.5,500.0 1015.5,500.5 1017.5,501.0 1019.5,501.8 1021.5,502.9 1023.5,503.8 1025.5,505.0 1027.5,506.1 1029.5,507.3 1031.5,508.2 1033.5,508.7 1035.5,508.3 1037.5,508.4 1039.5,508.5 1041.5,508.6 1043.5,508.9 1045.5,509.0 1047.5,508.9 1049.5,508.8 1051.5,508.1 1053.5,507.8 1055.5,507.3 1057.5,506.5 1059.5,505.5 1061.5,504.8 1063.5,504.2 1065.5,502.9 1067.5,501.4 1069.5,500.2 1071.5,498.4 1073.5,496.7 1075.5,494.6 1077.5,492.5 1079.5,490.8 1081.5,488.5 1083.5,485.9 1085.5,482.7 1087.5,480.0 1089.5,471.8" fill="none" stroke="#ff0000" stroke-width="1"/>
<path d="M258 176h3v1h-3zM259 175h1v3h-1zM260 183h3v1h-3zM261 182h1v3h-1zM262 190h3v1h-3zM263 189h1v3h-1zM264 198h3v1h-3zM265 197h1v3h-1zM266 211h3v1h-3zM267 210h1v3h-1zM268 221h3v1h-3zM269 220h1v3h-1zM270 229h3v1h-3zM271 228h1v3h-1zM272 263h3v1h-3zM273 262h1v3h-1zM274 263h3v1h-3zM275 262h1v3h-1zM276 261h3v1h-3zM277 260h1v3h-1zM278 258h3v1h-3zM279 257h1v3h-1zM280 253h3v1h-3zM281 252h1v3h-1zM282 247h3v1h-3zM283 246h1v3h-1zM284 242h3v1h-3zM285 241h1v3h-1zM286 236h3v1h-3zM287 235h1v3h-1zM288 192h3v1h-3zM289 191h1v3h-1zM290 247h3v1h-3zM291 246h1v3h-1zM292 247h3v1h-3zM293 246h1v3h-1zM294 243h3v1h-3zM295 242h1v3h-1zM296 240h3v1h-3zM297 239h1v3h-1zM298 237h3v1h-3zM299 236h1v3h-1zM300 234h3v1h-3zM301 233h1v3h-1zM302 229h3v1h-3zM303 228h1v3h-1zM304 223h3v1h-3zM305 222h1v3h-1zM306 214h3v1h-3zM307 213h1v3h-1zM308 204h3v1h-3zM309 203h1v3h-1zM310 193h3v1h-3zM311 192h1v3h-1zM312 180h3v1h-3zM313 179h1v3h-1zM314 167h3v1h-3zM315 166h1v3h-1zM316 156h3v1h-3zM317 155h1v3h-1zM318 146h3v1h-3zM319 145h1v3h-1zM320 137h3v1h-3zM321 136h1v3h-1zM322 130h3v1h-3zM323 129h1v3h-1zM324 124h3v1h-3zM325 123h1v3h-1zM326 119h3v1h-3zM327 118h1v3h-1zM328 114h3v1h-3zM329 113h1v3h-1zM330 110h3v1h-3zM331 109h1v3h-1zM332 107h3v1h-3zM333 106h1v3h-1zM334 78h3v1h-3zM335 77h1v3h-1zM336 78h3v1h-3zM337 77h1v3h-1zM338 79h3v1h-3zM339 78h1v3h-1zM340 79h3v1h-3zM341 78h1v3h-1zM342 80h3v1h-3zM343 79h1v3h-1zM344 81h3v1h-3zM345 80h1v3h-1zM346 82h3v1h-3zM347 81h1v3h-1zM348 83h3v1h-3zM349 82h1v3h-1zM350 84h3v1h-3zM351 83h1v3h-1zM352 86h3v1h-3zM353 85h1v3h-1zM354 87h3v1h-3zM355 86h1v3h-1zM356 88h3v1h-3zM357 87h1v3h-1zM358 108h3v1h-3zM359 107h1v3h-1zM360 89h3v1h-3zM361 88h1v3h-1zM362 89h3v1h-3zM363 88h1v3h-1zM364 91h3v1h-3zM365 90h1v3h-1zM366 92h3v1h-3zM367 91h1v3h-1zM368 95h3v1h-3zM369 94h1v3h-1zM370 98h3v1h-3zM371 97h1v3h-1zM372 136h3v1h-3zM373 135h1v3h-1zM374 135h3v1h-3zM375 134h1v3h-1zM376 134h3v1h-3zM377 133h1v3h-1zM378 133h3v1h-3zM379 132h1v3h-1zM380 133h3v1h-3zM381 132h1v3h-1zM382 132h3v1h-3zM383 131h1v3h-1zM384 131h3v1h-3zM385 130h1v3h-1zM386 130h3v1h-3zM387 129h1v3h-1zM388 130h3v1h-3zM389 129h1v3h-1zM390 129h3v1h-3zM391 128h1v3h-1zM392 128h3v1h-3zM393 127h1v3h-1zM394 127h3v1h-3zM395 126h1v3h-1zM396 95h3v1h-3zM397 94h1v3h-1zM398 96h3v1h-3zM399 95h1v3h-1zM400 98h3v1h-3zM401 97h1v3h-1zM402 102h3v1h-3zM403 101h1v3h-1zM404 108h3v1h-3zM405 107h1v3h-1zM406 116h3v1h-3zM407 115h1v3h-1zM408 125h3v1h-3zM409 124h1v3h-1zM410 137h3v1h-3zM411 136h1v3h-1zM412 154h3v1h-3zM413 153h1v3h-1zM414 172h3v1h-3zM415 171h1v3h-1zM416 191h3v1h-3zM417 190h1v3h-1zM418 207h3v1h-3zM419 206h1v3h-1zM420 222h3v1h-3zM421 221h1v3h-1zM422 235h3v1h-3zM423 234h1v3h-1zM424 285h3v1h-3zM425 284h1v3h-1zM426 284h3v1h-3zM427 283h1v3h-1zM428 238h3v1h-3zM429 237h1v3h-1zM430 239h3v1h-3zM431 238h1v3h-1zM432 240h3v1h-3zM433 239h1v3h-1zM434 241h3v1h-3zM435 240h1v3h-1zM436 242h3v1h-3zM437 241h1v3h-1zM438 243h3v1h-3zM439 242h1v3h-1zM440 244h3v1h-3zM441 243h1v3h-1zM442 245h3v1h-3zM443 244h1v3h-1zM444 247h3v1h-3zM445 246h1v3h-1zM446 247h3v1h-3zM447 246h1v3h-1zM448 249h3v1h-3zM449 248h1v3h-1zM450 250h3v1h-3zM451 249h1v3h-1zM452 252h3v1h-3zM453 251h1v3h-1zM454 253h3v1h-3zM455 252h1v3h-1zM456 253h3v1h-3zM457 252h1v3h-1zM458 254h3v1h-3zM459 253h1v3h-1zM460 256h3v1h-3zM461 255h1v3h-1zM462 258h3v1h-3zM463 257h1v3h-1zM464 261h3v1h-3zM465 260h1v3h-1zM466 263h3v1h-3zM467 262h1v3h-1zM468 293h3v1h-3zM469 292h1v3h-1zM470 293h3v1h-3zM471 292h1v3h-1zM472 292h3v1h-3zM473 291h1v3h-1zM474 290h3v1h-3zM475 289h1v3h-1zM476 289h3v1h-3zM477 288h1v3h-1zM478 254h3v1h-3zM479 253h1v3h-1zM480 255h3v1h-3zM481 254h1v3h-1zM482 256h3v1h-3zM483 255h1v3h-1zM484 257h3v1h-3zM485 256h1v3h-1zM486 259h3v1h-3zM487 258h1v3h-1zM488 263h3v1h-3zM489 262h1v3h-1zM490 268h3v1h-3zM491 267h1v3h-1zM492 316h3v1h-3zM493 315h1v3h-1zM494 315h3v1h-3zM495 314h1v3h-1zM496 314h3v1h-3zM497 313h1v3h-1zM498 313h3v1h-3zM499 312h1v3h-1zM500 311h3v1h-3zM501 310h1v3h-1zM502 307h3v1h-3zM503 306h1v3h-1zM504 302h3v1h-3zM505 301h1v3h-1zM506 295h3v1h-3zM507 294h1v3h-1zM508 286h3v1h-3zM509 285h1v3h-1zM510 275h3v1h-3zM511 274h1v3h-1zM512 264h3v1h-3zM513 263h1v3h-1zM514 252h3v1h-3zM515 251h1v3h-1zM516 242h3v1h-3zM517 241h1v3h-1zM518 199h3v1h-3zM519 198h1v3h-1zM520 199h3v1h-3zM521 198h1v3h-1zM522 201h3v1h-3zM523 200h1v3h-1zM524 203h3v1h-3zM525 202h1v3h-1zM526 207h3v1h-3zM527 206h1v3h-1zM528 210h3v1h-3zM529 209h1v3h-1zM530 214h3v1h-3zM531 213h1v3h-1zM532 216h3v1h-3zM533 215h1v3h-1zM534 219h3v1h-3zM535 218h1v3h-1zM536 221h3v1h-3zM537 220h1v3h-1zM538 224h3v1h-3zM539 223h1v3h-1zM540 226h3v1h-3zM541 225h1v3h-1zM542 252h3v1h-3zM543 251h1v3h-1zM544 252h3v1h-3zM545 251h1v3h-1zM546 251h3v1h-3zM547 250h1v3h-1zM548 227h3v1h-3zM549 226h1v3h-1zM550 255h3v1h-3zM551 254h1v3h-1zM552 255h3v1h-3zM553 254h1v3h-1zM554 227h3v1h-3zM555 226h1v3h-1zM556 228h3v1h-3zM557 227h1v3h-1zM558 228h3v1h-3zM559 227h1v3h-1zM560 229h3v1h-3zM561 228h1v3h-1zM562 229h3v1h-3zM563 228h1v3h-1zM564 230h3v1h-3zM565 229h1v3h-1zM566 231h3v1h-3zM567 230h1v3h-1zM568 232h3v1h-3zM569 231h1v3h-1zM570 233h3v1h-3zM571 232h1v3h-1zM572 234h3v1h-3zM573 233h1v3h-1zM574 236h3v1h-3zM575 235h1v3h-1zM576 237h3v1h-3zM577 236h1v3h-1zM578 238h3v1h-3zM579 237h1v3h-1zM580 269h3v1h-3zM581 268h1v3h-1zM582 269h3v1h-3zM583 268h1v3h-1zM584 269h3v1h-3zM585 268h1v3h-1zM586 268h3v1h-3zM587 267h1v3h-1zM588 267h3v1h-3zM589 266h1v3h-1zM590 266h3v1h-3zM591 265h1v3h-1zM592 265h3v1h-3zM593 264h1v3h-1zM594 263h3v1h-3zM595 262h1v3h-1zM596 260h3v1h-3zM597 259h1v3h-1zM598 257h3v1h-3zM599 256h1v3h-1zM600 222h3v1h-3zM601 221h1v3h-1zM602 223h3v1h-3zM603 222h1v3h-1zM604 226h3v1h-3zM605 225h1v3h-1zM606 229h3v1h-3zM607 228h1v3h-1zM608 232h3v1h-3zM609 231h1v3h-1zM610 236h3v1h-3zM611 235h1v3h-1zM612 242h3v1h-3zM613 241h1v3h-1zM614 247h3v1h-3zM615 246h1v3h-1zM616 252h3v1h-3zM617 251h1v3h-1zM618 256h3v1h-3zM619 255h1v3h-1zM620 260h3v1h-3zM621 259h1v3h-1zM622 261h3v1h-3zM623 260h1v3h-1zM624 261h3v1h-3zM625 260h1v3h-1zM626 264h3v1h-3zM627 263h1v3h-1zM628 267h3v1h-3zM629 266h1v3h-1zM630 268h3v1h-3zM631 267h1v3h-1zM632 271h3v1h-3zM633 270h1v3h-1zM634 273h3v1h-3zM635 272h1v3h-1zM636 276h3v1h-3zM637 275h1v3h-1zM638 279h3v1h-3zM639 278h1v3h-1zM640 282h3v1h-3zM641 281h1v3h-1zM642 289h3v1h-3zM643 288h1v3h-1zM644 296h3v1h-3zM645 295h1v3h-1zM646 303h3v1h-3zM647 302h1v3h-1zM648 323h3v1h-3zM649 322h1v3h-1zM650 341h3v1h-3zM651 340h1v3h-1zM652 358h3v1h-3zM653 357h1v3h-1zM654 372h3v1h-3zM655 371h1v3h-1zM656 426h3v1h-3zM657 425h1v3h-1zM658 425h3v1h-3zM659 424h1v3h-1zM660 424h3v1h-3zM661 423h1v3h-1zM662 423h3v1h-3zM663 422h1v3h-1zM664 420h3v1h-3zM665 419h1v3h-1zM666 418h3v1h-3zM667 417h1v3h-1zM668 366h3v1h-3zM669 365h1v3h-1zM670 367h3v1h-3zM671 366h1v3h-1zM672 368h3v1h-3zM673 367h1v3h-1zM674 371h3v1h-3zM675 370h1v3h-1zM676 375h3v1h-3zM677 374h1v3h-1zM678 379h3v1h-3zM679 378h1v3h-1zM680 382h3v1h-3zM681 381h1v3h-1zM682 388h3v1h-3zM683 387h1v3h-1zM684 393h3v1h-3zM685 392h1v3h-1zM686 397h3v1h-3zM687 396h1v3h-1zM688 451h3v1h-3zM689 450h1v3h-1zM690 449h3v1h-3zM691 448h1v3h-1zM692 448h3v1h-3zM693 447h1v3h-1zM694 447h3v1h-3zM695 446h1v3h-1zM696 445h3v1h-3zM697 444h1v3h-1zM698 444h3v1h-3zM699 443h1v3h-1zM700 443h3v1h-3zM701 442h1v3h-1zM702 442h3v1h-3zM703 441h1v3h-1zM704 440h3v1h-3zM705 439h1v3h-1zM706 439h3v1h-3zM707 438h1v3h-1zM708 438h3v1h-3zM709 437h1v3h-1zM710 437h3v1h-3zM711 436h1v3h-1zM712 436h3v1h-3zM713 435h1v3h-1zM714 435h3v1h-3zM715 434h1v3h-1zM716 434h3v1h-3zM717 433h1v3h-1zM718 433h3v1h-3zM719 432h1v3h-1zM720 383h3v1h-3zM721 382h1v3h-1zM722 384h3v1h-3zM723 383h1v3h-1zM724 386h3v1h-3zM725 385h1v3h-1zM726 388h3v1h-3zM727 387h1v3h-1zM728 390h3v1h-3zM729 389h1v3h-1zM730 392h3v1h-3zM731 391h1v3h-1zM732 394h3v1h-3zM733 393h1v3h-1zM734 395h3v1h-3zM735 394h1v3h-1zM736 397h3v1h-3zM737 396h1v3h-1zM738 399h3v1h-3zM739 398h1v3h-1zM740 400h3v1h-3zM741 399h1v3h-1zM742 402h3v1h-3zM743 401h1v3h-1zM744 402h3v1h-3zM745 401h1v3h-1zM746 404h3v1h-3zM747 403h1v3h-1zM748 405h3v1h-3zM749 404h1v3h-1zM750 406h3v1h-3zM751 405h1v3h-1zM752 407h3v1h-3zM753 406h1v3h-1zM754 409h3v1h-3zM755 408h1v3h-1zM756 410h3v1h-3zM757 409h1v3h-1zM758 411h3v1h-3zM759 410h1v3h-1zM760 437h3v1h-3zM761 436h1v3h-1zM762 436h3v1h-3zM763 435h1v3h-1zM764 435h3v1h-3zM765 434h1v3h-1zM766 407h3v1h-3zM767 406h1v3h-1zM768 408h3v1h-3zM769 407h1v3h-1zM770 410h3v1h-3zM771 409h1v3h-1zM772 411h3v1h-3zM773 410h1v3h-1zM774 414h3v1h-3zM775 413h1v3h-1zM776 419h3v1h-3zM777 418h1v3h-1zM778 428h3v1h-3zM779 427h1v3h-1zM780 438h3v1h-3zM781 437h1v3h-1zM782 449h3v1h-3zM783 448h1v3h-1zM784 460h3v1h-3zM785 459h1v3h-1zM786 469h3v1h-3zM787 468h1v3h-1zM788 476h3v1h-3zM789 475h1v3h-1zM790 483h3v1h-3zM791 482h1v3h-1zM792 517h3v1h-3zM793 516h1v3h-1zM794 516h3v1h-3zM795 515h1v3h-1zM796 515h3v1h-3zM797 514h1v3h-1zM798 514h3v1h-3zM799 513h1v3h-1zM800 512h3v1h-3zM801 511h1v3h-1zM802 509h3v1h-3zM803 508h1v3h-1zM804 472h3v1h-3zM805 471h1v3h-1zM806 472h3v1h-3zM807 471h1v3h-1zM808 474h3v1h-3zM809 473h1v3h-1zM810 477h3v1h-3zM811 476h1v3h-1zM812 482h3v1h-3zM813 481h1v3h-1zM814 486h3v1h-3zM815 485h1v3h-1zM816 490h3v1h-3zM817 489h1v3h-1zM818 495h3v1h-3zM819 494h1v3h-1zM820 499h3v1h-3zM821 498h1v3h-1zM822 540h3v1h-3zM823 539h1v3h-1zM824 539h3v1h-3zM825 538h1v3h-1zM826 537h3v1h-3zM827 536h1v3h-1zM828 534h3v1h-3zM829 533h1v3h-1zM830 531h3v1h-3zM831 530h1v3h-1zM832 488h3v1h-3zM833 487h1v3h-1zM834 489h3v1h-3zM835 488h1v3h-1zM836 490h3v1h-3zM837 489h1v3h-1zM838 491h3v1h-3zM839 490h1v3h-1zM840 493h3v1h-3zM841 492h1v3h-1zM842 495h3v1h-3zM843 494h1v3h-1zM844 496h3v1h-3zM845 495h1v3h-1zM846 498h3v1h-3zM847 497h1v3h-1zM848 499h3v1h-3zM849 498h1v3h-1zM850 501h3v1h-3zM851 500h1v3h-1zM852 534h3v1h-3zM853 533h1v3h-1zM854 534h3v1h-3zM855 533h1v3h-1zM856 532h3v1h-3zM857 531h1v3h-1zM858 529h3v1h-3zM859 528h1v3h-1zM860 526h3v1h-3zM861 525h1v3h-1zM862 522h3v1h-3zM863 521h1v3h-1zM864 519h3v1h-3zM865 518h1v3h-1zM866 514h3v1h-3zM867 513h1v3h-1zM868 509h3v1h-3zM869 508h1v3h-1zM870 503h3v1h-3zM871 502h1v3h-1zM872 495h3v1h-3zM873 494h1v3h-1zM874 488h3v1h-3zM875 487h1v3h-1zM876 482h3v1h-3zM877 481h1v3h-1zM878 477h3v1h-3zM879 476h1v3h-1zM880 447h3v1h-3zM881 446h1v3h-1zM882 448h3v1h-3zM883 447h1v3h-1zM884 449h3v1h-3zM885 448h1v3h-1zM886 491h3v1h-3zM887 490h1v3h-1zM888 491h3v1h-3zM889 490h1v3h-1zM890 490h3v1h-3zM891 489h1v3h-1zM892 489h3v1h-3zM893 488h1v3h-1zM894 489h3v1h-3zM895 488h1v3h-1zM896 488h3v1h-3zM897 487h1v3h-1zM898 486h3v1h-3zM899 485h1v3h-1zM900 485h3v1h-3zM901 484h1v3h-1zM902 483h3v1h-3zM903 482h1v3h-1zM904 481h3v1h-3zM905 480h1v3h-1zM906 442h3v1h-3zM907 441h1v3h-1zM908 443h3v1h-3zM909 442h1v3h-1zM910 444h3v1h-3zM911 443h1v3h-1zM912 480h3v1h-3zM913 479h1v3h-1zM914 479h3v1h-3zM915 478h1v3h-1zM916 478h3v1h-3zM917 477h1v3h-1zM918 444h3v1h-3zM919 443h1v3h-1zM920 445h3v1h-3zM921 444h1v3h-1zM922 447h3v1h-3zM923 446h1v3h-1zM924 451h3v1h-3zM925 450h1v3h-1zM926 454h3v1h-3zM927 453h1v3h-1zM928 458h3v1h-3zM929 457h1v3h-1zM930 461h3v1h-3zM931 460h1v3h-1zM932 465h3v1h-3zM933 464h1v3h-1zM934 511h3v1h-3zM935 510h1v3h-1zM936 510h3v1h-3zM937 509h1v3h-1zM938 508h3v1h-3zM939 507h1v3h-1zM940 506h3v1h-3zM941 505h1v3h-1zM942 504h3v1h-3zM943 503h1v3h-1zM944 458h3v1h-3zM945 457h1v3h-1zM946 459h3v1h-3zM947 458h1v3h-1zM948 461h3v1h-3zM949 460h1v3h-1zM950 464h3v1h-3zM951 463h1v3h-1zM952 467h3v1h-3zM953 466h1v3h-1zM954 471h3v1h-3zM955 470h1v3h-1zM956 475h3v1h-3zM957 474h1v3h-1zM958 478h3v1h-3zM959 477h1v3h-1zM960 483h3v1h-3zM961 482h1v3h-1zM962 490h3v1h-3zM963 489h1v3h-1zM964 497h3v1h-3zM965 496h1v3h-1zM966 544h3v1h-3zM967 543h1v3h-1zM968 544h3v1h-3zM969 543h1v3h-1zM970 542h3v1h-3zM971 541h1v3h-1zM972 538h3v1h-3zM973 537h1v3h-1zM974 535h3v1h-3zM975 534h1v3h-1zM976 532h3v1h-3zM977 531h1v3h-1zM978 529h3v1h-3zM979 528h1v3h-1zM980 524h3v1h-3zM981 523h1v3h-1zM982 520h3v1h-3zM983 519h1v3h-1zM984 516h3v1h-3zM985 515h1v3h-1zM986 512h3v1h-3zM987 511h1v3h-1zM988 510h3v1h-3zM989 509h1v3h-1zM990 508h3v1h-3zM991 507h1v3h-1zM992 506h3v1h-3zM993 505h1v3h-1zM994 503h3v1h-3zM995 502h1v3h-1zM996 501h3v1h-3zM997 500h1v3h-1zM998 501h3v1h-3zM999 500h1v3h-1zM1000 470h3v1h-3zM1001 469h1v3h-1zM1002 471h3v1h-3zM1003 470h1v3h-1zM1004 472h3v1h-3zM1005 471h1v3h-1zM1006 473h3v1h-3zM1007 472h1v3h-1zM1008 476h3v1h-3zM1009 475h1v3h-1zM1010 479h3v1h-3zM1011 478h1v3h-1zM1012 482h3v1h-3zM1013 481h1v3h-1zM1014 485h3v1h-3zM1015 484h1v3h-1zM1016 488h3v1h-3zM1017 487h1v3h-1zM1018 490h3v1h-3zM1019 489h1v3h-1zM1020 492h3v1h-3zM1021 491h1v3h-1zM1022 494h3v1h-3zM1023 493h1v3h-1zM1024 496h3v1h-3zM1025 495h1v3h-1zM1026 498h3v1h-3zM1027 497h1v3h-1zM1028 499h3v1h-3zM1029 498h1v3h-1zM1030 501h3v1h-3zM1031 500h1v3h-1zM1032 502h3v1h-3zM1033 501h1v3h-1zM1034 518h3v1h-3zM1035 517h1v3h-1zM1036 518h3v1h-3zM1037 517h1v3h-1zM1038 517h3v1h-3zM1039 516h1v3h-1zM1040 517h3v1h-3zM1041 516h1v3h-1zM1042 516h3v1h-3zM1043 515h1v3h-1zM1044 516h3v1h-3zM1045 515h1v3h-1zM1046 516h3v1h-3zM1047 515h1v3h-1zM1048 516h3v1h-3zM1049 515h1v3h-1zM1050 516h3v1h-3zM1051 515h1v3h-1zM1052 514h3v1h-3zM1053 513h1v3h-1zM1054 513h3v1h-3zM1055 512h1v3h-1zM1056 511h3v1h-3zM1057 510h1v3h-1zM1058 509h3v1h-3zM1059 508h1v3h-1zM1060 508h3v1h-3zM1061 507h1v3h-1zM1062 507h3v1h-3zM1063 506h1v3h-1zM1064 505h3v1h-3zM1065 504h1v3h-1zM1066 503h3v1h-3zM1067 502h1v3h-1zM1068 500h3v1h-3zM1069 499h1v3h-1zM1070 497h3v1h-3zM1071 496h1v3h-1zM1072 495h3v1h-3zM1073 494h1v3h-1zM1074 492h3v1h-3zM1075 491h1v3h-1zM1076 489h3v1h-3zM1077 488h1v3h-1zM1078 486h3v1h-3zM1079 485h1v3h-1zM1080 484h3v1h-3zM1081 483h1v3h-1zM1082 482h3v1h-3zM1083 481h1v3h-1zM1084 478h3v1h-3zM1085 477h1v3h-1zM1086 474h3v1h-3zM1087 473h1v3h-1zM1088 470h3v1h-3zM1089 469h1v3h-1z" fill="#00ff00"/>
<path d="M259 176h1v1h-1zM261 183h1v1h-1zM263 190h1v1h-1zM265 198h1v1h-1zM267 211h1v1h-1zM269 221h1v1h-1zM271 229h1v1h-1zM273 263h1v1h-1zM275 263h1v1h-1zM277 261h1v1h-1zM279 258h1v1h-1zM281 253h1v1h-1zM283 247h1v1h-1zM285 242h1v1h-1zM287 236h1v1h-1zM289 192h1v1h-1zM291 247h1v1h-1zM293 247h1v1h-1zM295 243h1v1h-1zM297 240h1v1h-1zM299 237h1v1h-1zM301 234h1v1h-1zM303 229h1v1h-1zM305 223h1v1h-1zM307 214h1v1h-1zM309 204h1v1h-1zM311 193h1v1h-1zM313 180h1v1h-1zM315 167h1v1h-1zM317 156h1v1h-1zM319 146h1v1h-1zM321 137h1v1h-1zM323 130h1v1h-1zM325 124h1v1h-1zM327 119h1v1h-1zM329 114h1v1h-1zM331 110h1v1h-1zM333 107h1v1h-1zM335 78h1v1h-1zM337 78h1v1h-1zM339 79h1v1h-1zM341 79h1v1h-1zM343 80h1v1h-1zM345 81h1v1h-1zM347 82h1v1h-1zM349 83h1v1h-1zM351 84h1v1h-1zM353 86h1v1h-1zM355 87h1v1h-1zM357 88h1v1h-1zM359 108h1v1h-1zM361 89h1v1h-1zM363 89h1v1h-1zM365 91h1v1h-1zM367 92h1v1h-1zM369 95h1v1h-1zM371 98h1v1h-1zM373 136h1v1h-1zM375 135h1v1h-1zM377 134h1v1h-1zM379 133h1v1h-1zM381 133h1v1h-1zM383 132h1v1h-1zM385 131h1v1h-1zM387 130h1v1h-1zM389 130h1v1h-1zM391 129h1v1h-1zM393 128h1v1h-1zM395 127h1v1h-1zM397 95h1v1h-1zM399 96h1v1h-1zM401 98h1v1h-1zM403 102h1v1h-1zM405 108h1v1h-1zM407 116h1v1h-1zM409 125h1v1h-1zM411 137h1v1h-1zM413 154h1v1h-1zM415 172h1v1h-1zM417 191h1v1h-1zM419 207h1v1h-1zM421 222h1v1h-1zM423 235h1v1h-1zM425 285h1v1h-1zM427 284h1v1h-1zM429 238h1v1h-1zM431 239h1v1h-1zM433 240h1v1h-1zM435 241h1v1h-1zM437 242h1v1h-1zM439 243h1v1h-1zM441 244h1v1h-1zM443 245h1v1h-1zM445 247h1v1h-1zM447 247h1v1h-1zM449 249h1v1h-1zM451 250h1v1h-1zM453 252h1v1h-1zM455 253h1v1h-1zM457 253h1v1h-1zM459 254h1v1h-1zM461 256h1v1h-1zM463 258h1v1h-1zM465 261h1v1h-1zM467 263h1v1h-1zM469 293h1v1h-1zM471 293h1v1h-1zM473 292h1v1h-1zM475 290h1v1h-1zM477 289h1v1h-1zM479 254h1v1h-1zM481 255h1v1h-1zM483 256h1v1h-1zM485 257h1v1h-1zM487 259h1v1h-1zM489 263h1v1h-1zM491 268h1v1h-1zM493 316h1v1h-1zM495 315h1v1h-1zM497 314h1v1h-1zM499 313h1v1h-1zM501 311h1v1h-1zM503 307h1v1h-1zM505 302h1v1h-1zM507 295h1v1h-1zM509 286h1v1h-1zM511 275h1v1h-1zM513 264h1v1h-1zM515 252h1v1h-1zM517 242h1v1h-1zM519 199h1v1h-1zM521 199h1v1h-1zM523 201h1v1h-1zM525 203h1v1h-1zM527 207h1v1h-1zM529 210h1v1h-1zM531 214h1v1h-1zM533 216h1v1h-1zM535 219h1v1h-1zM537 221h1v1h-1zM539 224h1v1h-1zM541 226h1v1h-1zM543 252h1v1h-1zM545 252h1v1h-1zM547 251h1v1h-1zM549 227h1v1h-1zM551 255h1v1h-1zM553 255h1v1h-1zM555 227h1v1h-1zM557 228h1v1h-1zM559 228h1v1h-1zM561 229h1v1h-1zM563 229h1v1h-1zM565 230h1v1h-1zM567 231h1v1h-1zM569 232h1v1h-1zM571 233h1v1h-1zM573 234h1v1h-1zM575 236h1v1h-1zM577 237h1v1h-1zM579 238h1v1h-1zM581 269h1v1h-1zM583 269h1v1h-1zM585 269h1v1h-1zM587 268h1v1h-1zM589 267h1v1h-1zM591 266h1v1h-1zM593 265h1v1h-1zM595 263h1v1h-1zM597 260h1v1h-1zM599 257h1v1h-1zM601 222h1v1h-1zM603 223h1v1h-1zM605 226h1v1h-1zM607 229h1v1h-1zM609 232h1v1h-1zM611 236h1v1h-1zM613 242h1v1h-1zM615 247h1v1h-1zM617 252h1v1h-1zM619 256h1v1h-1zM621 260h1v1h-1zM623 261h1v1h-1zM625 261h1v1h-1zM627 264h1v1h-1zM629 267h1v1h-1zM631 268h1v1h-1zM633 271h1v1h-1zM635 273h1v1h-1zM637 276h1v1h-1zM639 279h1v1h-1zM641 282h1v1h-1zM643 289h1v1h-1zM645 296h1v1h-1zM647 303h1v1h-1zM649 323h1v1h-1zM651 341h1v1h-1zM653 358h1v1h-1zM655 372h1v1h-1zM657 426h1v1h-1zM659 425h1v1h-1zM661 424h1v1h-1zM663 423h1v1h-1zM665 420h1v1h-1zM667 418h1v1h-1zM669 366h1v1h-1zM671 367h1v1h-1zM673 368h1v1h-1zM675 371h1v1h-1zM677 375h1v1h-1zM679 379h1v1h-1zM681 382h1v1h-1zM683 388h1v1h-1zM685 393h1v1h-1zM687 397h1v1h-1zM689 451h1v1h-1zM691 449h1v1h-1zM693 448h1v1h-1zM695 447h1v1h-1zM697 445h1v1h-1zM699 444h1v1h-1zM701 443h1v1h-1zM703 442h1v1h-1zM705 440h1v1h-1zM707 439h1v1h-1zM709 438h1v1h-1zM711 437h1v1h-1zM713 436h1v1h-1zM715 435h1v1h-1zM717 434h1v1h-1zM719 433h1v1h-1zM721 383h1v1h-1zM723 384h1v1h-1zM725 386h1v1h-1zM727 388h1v1h-1zM729 390h1v1h-1zM731 392h1v1h-1zM733 394h1v1h-1zM735 395h1v1h-1zM737 397h1v1h-1zM739 399h1v1h-1zM741 400h1v1h-1zM743 402h1v1h-1zM745 402h1v1h-1zM747 404h1v1h-1zM749 405h1v1h-1zM751 406h1v1h-1zM753 407h1v1h-1zM755 409h1v1h-1zM757 410h1v1h-1zM759 411h1v1h-1zM761 437h1v1h-1zM763 436h1v1h-1zM765 435h1v1h-1zM767 407h1v1h-1zM769 408h1v1h-1zM771 410h1v1h-1zM773 411h1v1h-1zM775 414h1v1h-1zM777 419h1v1h-1zM779 428h1v1h-1zM781 438h1v1h-1zM783 449h1v1h-1zM785 460h1v1h-1zM787 469h1v1h-1zM789 476h1v1h-1zM791 483h1v1h-1zM793 517h1v1h-1zM795 516h1v1h-1zM797 515h1v1h-1zM799 514h1v1h-1zM801 512h1v1h-1zM803 509h1v1h-1zM805 472h1v1h-1zM807 472h1v1h-1zM809 474h1v1h-1zM811 477h1v1h-1zM813 482h1v1h-1zM815 486h1v1h-1zM817 490h1v1h-1zM819 495h1v1h-1zM821 499h1v1h-1zM823 540h1v1h-1zM825 539h1v1h-1zM827 537h1v1h-1zM829 534h1v1h-1zM831 531h1v1h-1zM833 488h1v1h-1zM835 489h1v1h-1zM837 490h1v1h-1zM839 491h1v1h-1zM841 493h1v1h-1zM843 495h1v1h-1zM845 496h1v1h-1zM847 498h1v1h-1zM849 499h1v1h-1zM851 501h1v1h-1zM853 534h1v1h-1zM855 534h1v1h-1zM857 532h1v1h-1zM859 529h1v1h-1zM861 526h1v1h-1zM863 522h1v1h-1zM865 519h1v1h-1zM867 514h1v1h-1zM869 509h1v1h-1zM871 503h1v1h-1zM873 495h1v1h-1zM875 488h1v1h-1zM877 482h1v1h-1zM879 477h1v1h-1zM881 447h1v1h-1zM883 448h1v1h-1zM885 449h1v1h-1zM887 491h1v1h-1zM889 491h1v1h-1zM891 490h1v1h-1zM893 489h1v1h-1zM895 489h1v1h-1zM897 488h1v1h-1zM899 486h1v1h-1zM901 485h1v1h-1zM903 483h1v1h-1zM905 481h1v1h-1zM907 442h1v1h-1zM909 443h1v1h-1zM911 444h1v1h-1zM913 480h1v1h-1zM915 479h1v1h-1zM917 478h1v1h-1zM919 444h1v1h-1zM921 445h1v1h-1zM923 447h1v1h-1zM925 451h1v1h-1zM927 454h1v1h-1zM929 458h1v1h-1zM931 461h1v1h-1zM933 465h1v1h-1zM935 511h1v1h-1zM937 510h1v1h-1zM939 508h1v1h-1zM941 506h1v1h-1zM943 504h1v1h-1zM945 458h1v1h-1zM947 459h1v1h-1zM949 461h1v1h-1zM951 464h1v1h-1zM953 467h1v1h-1zM955 471h1v1h-1zM957 475h1v1h-1zM959 478h1v1h-1zM961 483h1v1h-1zM963 490h1v1h-1zM965 497h1v1h-1zM967 544h1v1h-1zM969 544h1v1h-1zM971 542h1v1h-1zM973 538h1v1h-1zM975 535h1v1h-1zM977 532h1v1h-1zM979 529h1v1h-1zM981 524h1v1h-1zM983 520h1v1h-1zM985 516h1v1h-1zM987 512h1v1h-1zM989 510h1v1h-1zM991 508h1v1h-1zM993 506h1v1h-1zM995 503h1v1h-1zM997 501h1v1h-1zM999 501h1v1h-1zM1001 470h1v1h-1zM1003 471h1v1h-1zM1005 472h1v1h-1zM1007 473h1v1h-1zM1009 476h1v1h-1zM1011 479h1v1h-1zM1013 482h1v1h-1zM1015 485h1v1h-1zM1017 488h1v1h-1zM1019 490h1v1h-1zM1021 492h1v1h-1zM1023 494h1v1h-1zM1025 496h1v1h-1zM1027 498h1v1h-1zM1029 499h1v1h-1zM1031 501h1v1h-1zM1033 502h1v1h-1zM1035 518h1v1h-1zM1037 518h1v1h-1zM1039 517h1v1h-1zM1041 517h1v1h-1zM1043 516h1v1h-1zM1045 516h1v1h-1zM1047 516h1v1h-1zM1049 516h1v1h-1zM1051 516h1v1h-1zM1053 514h1v1h-1zM1055 513h1v1h-1zM1057 511h1v1h-1zM1059 509h1v1h-1zM1061 508h1v1h-1zM1063 507h1v1h-1zM1065 505h1v1h-1zM1067 503h1v1h-1zM1069 500h1v1h-1zM1071 497h1v1h-1zM1073 495h1v1h-1zM1075 492h1v1h-1zM1077 489h1v1h-1zM1079 486h1v1h-1zM1081 484h1v1h-1zM1083 482h1v1h-1zM1085 478h1v1h-1zM1087 474h1v1h-1zM1089 470h1v1h-1z" fill="#fff"/>
</g>
</svg>
<div class="a" style="left:258px;top:54px;width:838px;height:510px;border:1px solid #fff"></div>
<svg style="left:262px;top:61px" width="7" height="4" viewBox="0 0 7 4"><path d="M0 0h7L3.5 4z" fill="#fff"/></svg>
<div class="t" style="left:274.5px;top:57.5px;font-size:9.2px;line-height:10px;color:#fff">EURUSD,M15&nbsp; 1.08667 1.08686 1.08654 1.08659</div>
<div class="t" style="left:1014px;top:57.5px;font-size:9.2px;line-height:10px;color:#fff;font-size:9.6px">MACD Sample</div>
<svg style="left:1079px;top:59px" width="12" height="12" viewBox="0 0 12 12"><circle cx="6" cy="6" r="5" fill="none" stroke="#fff"/><path d="M3.5 7c1.5 2 3.5 2 5 0" fill="none" stroke="#fff"/><path d="M4 4h1v1H4zM7 4h1v1H7z" fill="#fff"/></svg>
<div class="a" style="left:1096px;top:66px;width:4px;height:1px;background:#fff"></div>
<div class="t" style="left:1101px;top:60.5px;font-size:9.2px;line-height:10px;color:#fff">1.10470</div>
<div class="a" style="left:1096px;top:99px;width:4px;height:1px;background:#fff"></div>
<div class="t" style="left:1101px;top:93.5px;font-size:9.2px;line-height:10px;color:#fff">1.10280</div>
<div class="a" style="left:1096px;top:132px;width:4px;height:1px;background:#fff"></div>
<div class="t" style="left:1101px;top:126.5px;font-size:9.2px;line-height:10px;color:#fff">1.10090</div>
<div class="a" style="left:1096px;top:165px;width:4px;height:1px;background:#fff"></div>
<div class="t" style="left:1101px;top:159.5px;font-size:9.2px;line-height:10px;color:#fff">1.09900</div>
<div class="a" style="left:1096px;top:198px;width:4px;height:1px;background:#fff"></div>
<div class="t" style="left:1101px;top:192.5px;font-size:9.2px;line-height:10px;color:#fff">1.09710</div>
<div class="a" style="left:1096px;top:231px;width:4px;height:1px;background:#fff"></div>
<div class="t" style="left:1101px;top:225.5px;font-size:9.2px;line-height:10px;color:#fff">1.09520</div>
<div class="a" style="left:1096px;top:264px;width:4px;height:1px;background:#fff"></div>
<div class="t" style="left:1101px;top:258.5px;font-size:9.2px;line-height:10px;color:#fff">1.09330</div>
<div class="a" style="left:1096px;top:297px;width:4px;height:1px;background:#fff"></div>
<div class="t" style="left:1101px;top:291.5px;font-size:9.2px;line-height:10px;color:#fff">1.09140</div>
<div class="a" style="left:1096px;top:330px;width:4px;height:1px;background:#fff"></div>
<div class="t" style="left:1101px;top:324.5px;font-size:9.2px;line-height:10px;color:#fff">1.08950</div>
<div class="a" style="left:1096px;top:363px;width:4px;height:1px;background:#fff"></div>
<div class="t" style="left:1101px;top:357.5px;font-size:9.2px;line-height:10px;color:#fff">1.08760</div>
<div class="a" style="left:1096px;top:396px;width:4px;height:1px;background:#fff"></div>
<div class="t" style="left:1101px;top:390.5px;font-size:9.2px;line-height:10px;color:#fff">1.08570</div>
<div class="a" style="left:1096px;top:429px;width:4px;height:1px;background:#fff"></div>
<div class="t" style="left:1101px;top:423.5px;font-size:9.2px;line-height:10px;color:#fff">1.08385</div>
<div class="a" style="left:1096px;top:462px;width:4px;height:1px;background:#fff"></div>
<div class="t" style="left:1101px;top:456.5px;font-size:9.2px;line-height:10px;color:#fff">1.08195</div>
<div class="a" style="left:1096px;top:495px;width:4px;height:1px;background:#fff"></div>
<div class="t" style="left:1101px;top:489.5px;font-size:9.2px;line-height:10px;color:#fff">1.08005</div>
<div class="a" style="left:1096px;top:528px;width:4px;height:1px;background:#fff"></div>
<div class="t" style="left:1101px;top:522.5px;font-size:9.2px;line-height:10px;color:#fff">1.07815</div>
<div class="a" style="left:1096px;top:561px;width:4px;height:1px;background:#fff"></div>
<div class="t" style="left:1101px;top:555.5px;font-size:9.2px;line-height:10px;color:#fff">1.07625</div>
<div class="a" style="left:1097px;top:376px;width:39px;height:11px;background:#fff"></div>
<div class="t" style="left:1101px;top:376.5px;font-size:9.2px;line-height:10px;color:#fff;color:#000">1.08659</div>
<div class="t" style="left:258px;top:566px;font-size:9.2px;line-height:10px;color:#fff">31 Mar 2020</div>
<div class="a" style="left:323px;top:564px;width:1px;height:4px;background:#fff"></div>
<div class="t" style="left:323px;top:566px;font-size:9.2px;line-height:10px;color:#fff">31 Mar 23:45</div>
<div class="a" style="left:387px;top:564px;width:1px;height:4px;background:#fff"></div>
<div class="t" style="left:387px;top:566px;font-size:9.2px;line-height:10px;color:#fff">1 Apr 07:45</div>
<div class="a" style="left:451px;top:564px;width:1px;height:4px;background:#fff"></div>
<div class="t" style="left:451px;top:566px;font-size:9.2px;line-height:10px;color:#fff">1 Apr 15:45</div>
<div class="a" style="left:515px;top:564px;width:1px;height:4px;background:#fff"></div>
<div class="t" style="left:515px;top:566px;font-size:9.2px;line-height:10px;color:#fff">1 Apr 23:45</div>
<div class="a" style="left:579px;top:564px;width:1px;height:4px;background:#fff"></div>
<div class="t" style="left:579px;top:566px;font-size:9.2px;line-height:10px;color:#fff">2 Apr 07:45</div>
<div class="a" style="left:643px;top:564px;width:1px;height:4px;background:#fff"></div>
<div class="t" style="left:643px;top:566px;font-size:9.2px;line-height:10px;color:#fff">2 Apr 15:45</div>
<div class="a" style="left:707px;top:564px;width:1px;height:4px;background:#fff"></div>
<div class="t" style="left:707px;top:566px;font-size:9.2px;line-height:10px;color:#fff">3 Apr 01:45</div>
<div class="a" style="left:771px;top:564px;width:1px;height:4px;background:#fff"></div>
<div class="t" style="left:771px;top:566px;font-size:9.2px;line-height:10px;color:#fff">3 Apr 09:45</div>
<div class="a" style="left:835px;top:564px;width:1px;height:4px;background:#fff"></div>
<div class="t" style="left:835px;top:566px;font-size:9.2px;line-height:10px;color:#fff">3 Apr 17:45</div>
<div class="a" style="left:899px;top:564px;width:1px;height:4px;background:#fff"></div>
<div class="t" style="left:899px;top:566px;font-size:9.2px;line-height:10px;color:#fff">6 Apr 01:45</div>
<div class="a" style="left:963px;top:564px;width:1px;height:4px;background:#fff"></div>
<div class="t" style="left:963px;top:566px;font-size:9.2px;line-height:10px;color:#fff">6 Apr 16:15</div>
<div class="a" style="left:1027px;top:564px;width:1px;height:4px;background:#fff"></div>
<div class="t" style="left:1027px;top:566px;font-size:9.2px;line-height:10px;color:#fff">7 Apr 00:15</div>

<div class="a" style="left:0;top:583px;width:1136px;height:1px;background:#fff"></div>
<div class="a" style="left:0;top:600px;width:11px;height:184px;background:linear-gradient(180deg,#d0dcea,#bccde0)"></div>
<svg style="left:-1px;top:589px" width="7" height="7"><path d="M1 1l5 5M6 1l-5 5" stroke="#000" stroke-width="1.5"/></svg>
<div class="a" style="left:11px;top:587px;width:1px;height:197px;background:#a0a0a0"></div>
<div class="a" style="left:12px;top:587px;width:1122px;height:194px;background:#fff;border-top:1px solid #a0a0a0"></div>
<div class="a" style="left:1133px;top:587px;width:1px;height:194px;background:#e0e0e0"></div>
<div class="a" style="left:101px;top:588px;width:1px;height:24px;background:#e5e5e5"></div>
<div class="a" style="left:226px;top:588px;width:1px;height:24px;background:#e5e5e5"></div>
<div class="a" style="left:288px;top:588px;width:1px;height:24px;background:#e5e5e5"></div>
<div class="a" style="left:336px;top:588px;width:1px;height:24px;background:#e5e5e5"></div>
<div class="a" style="left:398px;top:588px;width:1px;height:24px;background:#e5e5e5"></div>
<div class="a" style="left:467px;top:588px;width:1px;height:24px;background:#e5e5e5"></div>
<div class="a" style="left:536px;top:588px;width:1px;height:24px;background:#e5e5e5"></div>
<div class="a" style="left:605px;top:588px;width:1px;height:24px;background:#e5e5e5"></div>
<div class="a" style="left:674px;top:588px;width:1px;height:24px;background:#e5e5e5"></div>
<div class="a" style="left:743px;top:588px;width:1px;height:24px;background:#e5e5e5"></div>
<div class="a" style="left:812px;top:588px;width:1px;height:24px;background:#e5e5e5"></div>
<div class="a" style="left:916px;top:588px;width:1px;height:24px;background:#e5e5e5"></div>
<div class="t" style="left:18px;top:594px;font-size:12px;line-height:12px">订单</div>
<div class="t r" style="left:121px;width:100px;top:594px;font-size:12px;line-height:12px">时间</div>
<div class="t r" style="left:183px;width:100px;top:594px;font-size:12px;line-height:12px">类型</div>
<div class="t r" style="left:231px;width:100px;top:594px;font-size:12px;line-height:12px">手数</div>
<div class="t r" style="left:293px;width:100px;top:594px;font-size:12px;line-height:12px">交易品种</div>
<div class="t r" style="left:362px;width:100px;top:594px;font-size:12px;line-height:12px">价格</div>
<div class="t r" style="left:431px;width:100px;top:594px;font-size:12px;line-height:12px">止损</div>
<div class="t r" style="left:500px;width:100px;top:594px;font-size:12px;line-height:12px">止盈</div>
<div class="t r" style="left:569px;width:100px;top:594px;font-size:12px;line-height:12px">价格</div>
<div class="t r" style="left:637px;width:100px;top:594px;font-size:12px;line-height:12px">手续费</div>
<div class="t r" style="left:706px;width:100px;top:594px;font-size:12px;line-height:12px">库存费</div>
<div class="t r" style="left:790px;width:100px;top:594px;font-size:12px;line-height:12px">获利</div>
<div class="t r" style="left:1027px;width:100px;top:594px;font-size:12px;line-height:12px">注释</div>
<svg style="left:902px;top:596px" width="8" height="7"><path d="M0.5 0.5h7L4 6.5z" fill="none" stroke="#808080"/></svg>
<div class="a" style="left:12px;top:612px;width:1121px;height:21px;background:#0078d7"></div>
<div class="a" style="left:101px;top:612px;width:1px;height:21px;background:#4a9ae0"></div>
<div class="a" style="left:226px;top:612px;width:1px;height:21px;background:#4a9ae0"></div>
<div class="a" style="left:288px;top:612px;width:1px;height:21px;background:#4a9ae0"></div>
<div class="a" style="left:336px;top:612px;width:1px;height:21px;background:#4a9ae0"></div>
<div class="a" style="left:398px;top:612px;width:1px;height:21px;background:#4a9ae0"></div>
<div class="a" style="left:467px;top:612px;width:1px;height:21px;background:#4a9ae0"></div>
<div class="a" style="left:536px;top:612px;width:1px;height:21px;background:#4a9ae0"></div>
<div class="a" style="left:605px;top:612px;width:1px;height:21px;background:#4a9ae0"></div>
<div class="a" style="left:674px;top:612px;width:1px;height:21px;background:#4a9ae0"></div>
<div class="a" style="left:743px;top:612px;width:1px;height:21px;background:#4a9ae0"></div>
<div class="a" style="left:812px;top:612px;width:1px;height:21px;background:#4a9ae0"></div>
<div class="a" style="left:916px;top:612px;width:1px;height:21px;background:#4a9ae0"></div>
<svg style="left:15px;top:617px" width="15" height="14" viewBox="0 0 15 14"><path d="M0.5 0.5h7l3 3v9h-10z" fill="#f8f8f8" stroke="#888"/><circle cx="10" cy="10" r="3.5" fill="#e83010" stroke="#a02000" stroke-width="0.6"/></svg>
<div class="t" style="left:33.5px;top:616px;font-size:12.5px;line-height:13px;color:#fff">188422...</div>
<div class="t r" style="left:22.5px;width:200px;top:616px;font-size:12.5px;line-height:13px;color:#fff">2020.04.07 05:24:28</div>
<div class="t r" style="left:85px;width:200px;top:616px;font-size:12.5px;line-height:13px;color:#fff">sell</div>
<div class="t r" style="left:133px;width:200px;top:616px;font-size:12.5px;line-height:13px;color:#fff">1.00</div>
<div class="t r" style="left:194px;width:200px;top:616px;font-size:12.5px;line-height:13px;color:#fff">audusd</div>
<div class="t r" style="left:263.5px;width:200px;top:616px;font-size:12.5px;line-height:13px;color:#fff">0.61149</div>
<div class="t r" style="left:332.5px;width:200px;top:616px;font-size:12.5px;line-height:13px;color:#fff">0.00000</div>
<div class="t r" style="left:401.79999999999995px;width:200px;top:616px;font-size:12.5px;line-height:13px;color:#fff">0.00000</div>
<div class="t r" style="left:470.5px;width:200px;top:616px;font-size:12.5px;line-height:13px;color:#fff">0.61869</div>
<div class="t r" style="left:539px;width:200px;top:616px;font-size:12.5px;line-height:13px;color:#fff">0.00</div>
<div class="t r" style="left:608px;width:200px;top:616px;font-size:12.5px;line-height:13px;color:#fff">0.00</div>
<div class="t r" style="left:692px;width:200px;top:616px;font-size:12.5px;line-height:13px;color:#fff">-720</div>
<div class="t r" style="left:928.5999999999999px;width:200px;top:616px;font-size:12px;line-height:13px;color:#fff">下载EA都来EAHub</div>
<svg style="left:901px;top:618px" width="10" height="10"><path d="M1.5 1.5l7 7M8.5 1.5l-7 7" stroke="#b8c8d8" stroke-width="2"/></svg>
<div class="a" style="left:12px;top:633px;width:1121px;height:21px;background:#c8c8c8"></div>
<svg style="left:15px;top:637px" width="12" height="13" viewBox="0 0 12 13"><rect x="0.5" y="0.5" width="11" height="12" fill="#fafafa" stroke="#888"/><path d="M6 11L9.5 7H7.5V3h-3v4H2.5z" fill="#e83010"/></svg>
<div class="t" style="left:33.5px;top:637px;font-size:12px;line-height:13px;font-weight:bold">余额<span style="font-size:12.6px">: 99 874.00 USD</span></div>
<div class="t" style="left:159.2px;top:637px;font-size:12px;line-height:13px;font-weight:bold">净值<span style="font-size:12.6px">: 99 154.00</span></div>
<div class="t" style="left:254.2px;top:637px;font-size:12px;line-height:13px;font-weight:bold">已用预付款<span style="font-size:12.6px">: 122.30</span></div>
<div class="t" style="left:368px;top:637px;font-size:12px;line-height:13px;font-weight:bold">可用预付款<span style="font-size:12.6px">: 99 031.70</span></div>
<div class="t" style="left:498px;top:637px;font-size:12px;line-height:13px;font-weight:bold">预付款比例<span style="font-size:12.6px">: 81075.73%</span></div>
<div class="t r" style="left:792px;width:100px;top:637px;font-size:12.6px;line-height:13px;font-weight:bold">-720.00</div>
<svg style="left:1065px;top:759px" width="20" height="20" viewBox="0 0 20 20"><rect x="0" y="0" width="20" height="20" rx="3" fill="#fb8b75"/><circle cx="10" cy="11" r="5.5" fill="#fff"/><circle cx="3.5" cy="11" r="1.8" fill="#fff"/><circle cx="16.5" cy="11" r="1.8" fill="#fff"/><path d="M7 5.5L6 3M13 5.5L14 3" stroke="#fff" stroke-width="1.3"/><circle cx="6" cy="2.8" r="1.2" fill="#fff"/><circle cx="14" cy="2.8" r="1.2" fill="#fff"/><rect x="6.5" y="9.5" width="7" height="3.5" rx="1.7" fill="#fb8b75"/><circle cx="8.5" cy="11.2" r="0.8" fill="#fff"/><circle cx="11.5" cy="11.2" r="0.8" fill="#fff"/></svg>
<div class="t" style="left:1090px;top:762px;font-family:'Liberation Serif',serif;font-size:14.5px;font-weight:bold;line-height:14px;color:#fb8b75;transform:scaleX(0.78);transform-origin:0 0">EAHub</div>
<div class="a" style="left:57px;top:780px;width:1077px;height:4px;background:#f0f0f0;border-top:1px solid #000;border-left:1px solid #000"></div>
<div class="a" style="left:0;top:780px;width:11px;height:4px;overflow:hidden"><div class="t" style="left:-2px;top:-3px;font-size:10px">终端</div></div>
</body></html>
